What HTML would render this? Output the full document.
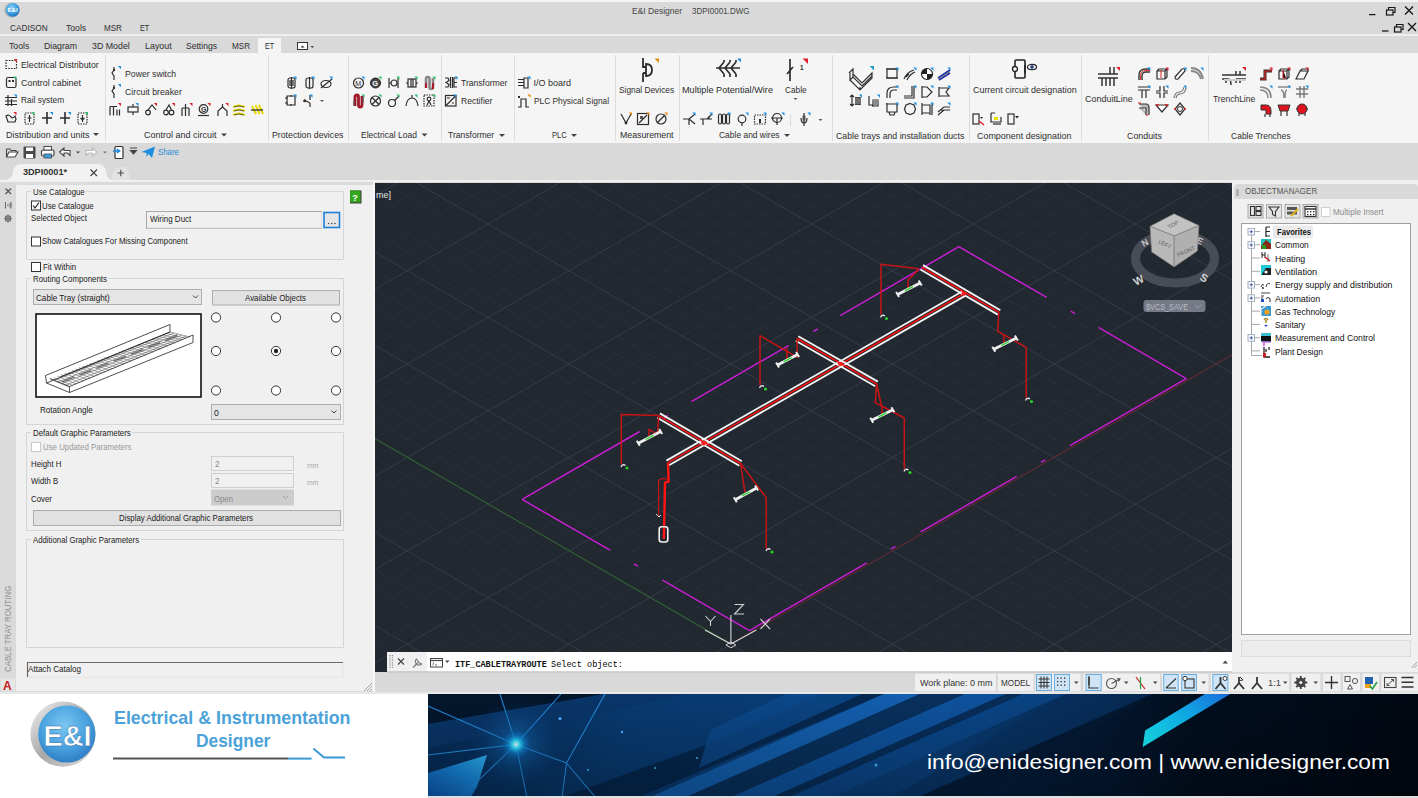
<!DOCTYPE html><html><head><meta charset="utf-8"><style>
html,body{margin:0;padding:0;width:1418px;height:798px;overflow:hidden;position:relative;background:#d9d9d9;}
body>*{box-sizing:border-box}
</style></head><body>
<div style="position:absolute;left:0px;top:0px;width:1418px;height:2px;background:#f4f4f4"></div>
<div style="position:absolute;left:0px;top:34px;width:1418px;height:2px;background:#efefef"></div>
<div style="position:absolute;left:0px;top:53px;width:1418px;height:90px;background:#f5f5f5"></div>
<div style="position:absolute;left:104.5px;top:55px;width:1px;height:86px;background:#dcdcdc"></div>
<div style="position:absolute;left:267.5px;top:55px;width:1px;height:86px;background:#dcdcdc"></div>
<div style="position:absolute;left:347.5px;top:55px;width:1px;height:86px;background:#dcdcdc"></div>
<div style="position:absolute;left:440.5px;top:55px;width:1px;height:86px;background:#dcdcdc"></div>
<div style="position:absolute;left:513.5px;top:55px;width:1px;height:86px;background:#dcdcdc"></div>
<div style="position:absolute;left:614.5px;top:55px;width:1px;height:86px;background:#dcdcdc"></div>
<div style="position:absolute;left:678.5px;top:55px;width:1px;height:86px;background:#dcdcdc"></div>
<div style="position:absolute;left:831.5px;top:55px;width:1px;height:86px;background:#dcdcdc"></div>
<div style="position:absolute;left:969px;top:55px;width:1px;height:86px;background:#dcdcdc"></div>
<div style="position:absolute;left:1080.5px;top:55px;width:1px;height:86px;background:#dcdcdc"></div>
<div style="position:absolute;left:1208px;top:55px;width:1px;height:86px;background:#dcdcdc"></div>
<div style="position:absolute;left:258px;top:38px;width:23px;height:15px;background:#f5f5f5"></div>
<svg style="position:absolute;left:0;top:160px" width="140" height="24"><path d="M2,21 Q12,20 13,12 Q14,4 22,4 H98 Q105,4 106,12 Q107,20 114,21 Z" fill="#f2f2f2"/></svg>
<svg style="position:absolute;left:100px;top:160px" width="40" height="24"><path d="M11,21 Q13,7 20,7 H24 Q28,7 29,14 Q30,20 35,21 Z" fill="#e2e2e2"/></svg>
<div style="position:absolute;left:0px;top:180px;width:1418px;height:2px;background:#f0f0f0"></div>
<div style="position:absolute;left:0px;top:182px;width:375px;height:510px;background:#dadada"></div>
<div style="position:absolute;left:16px;top:185px;width:357px;height:506px;background:#f0f0f0"></div>
<div style="position:absolute;left:373px;top:182px;width:2px;height:510px;background:#f7f7f7"></div>
<div style="position:absolute;left:375px;top:183px;width:857px;height:489px;background:#212830"></div>
<div style="position:absolute;left:387px;top:652px;width:845px;height:19.5px;background:#ffffff"></div>
<div style="position:absolute;left:387px;top:652px;width:40px;height:19.5px;background:#f0f0f0"></div>
<div style="position:absolute;left:375px;top:671.5px;width:1043px;height:21px;background:#d9d9d9"></div>
<div style="position:absolute;left:1232px;top:182px;width:186px;height:489.5px;background:#f0f0f0"></div>
<div style="position:absolute;left:1234px;top:184px;width:184px;height:15px;background:#d9d9d9;border-radius:4px 4px 0 0"></div>
<div style="position:absolute;left:1241px;top:223px;width:170px;height:412px;background:#fff;border:1px solid #a0a0a0"></div>
<div style="position:absolute;left:1241px;top:640px;width:170px;height:17px;background:#ececec;border:1px solid #dcdcdc"></div>
<div style="position:absolute;left:0px;top:692px;width:1418px;height:2px;background:#e8e8e8"></div>
<div style="position:absolute;left:0px;top:694px;width:428px;height:104px;background:#ffffff"></div>
<svg style="position:absolute;left:0;top:0" width="1418" height="200"><g transform="translate(6,60.5) scale(1.0)"><rect x="0" y="0" width="10.5" height="8" fill="none" stroke="#2d2d2d" stroke-width="1.2" stroke-dasharray="1.6 1.2"/></g><path d="M13.8,59 L17,59 L17,62.2 Z" fill="#e0202a"/><g transform="translate(6.5,77.5) scale(1.0)"><rect x="0" y="0" width="9.5" height="10" rx="1.5" fill="none" stroke="#2d2d2d" stroke-width="1.2"/><rect x="2" y="2.5" width="2" height="2" fill="#2d2d2d"/><rect x="5.5" y="2.5" width="2" height="2" fill="#2d2d2d"/></g><path d="M13.3,76.5 L16.5,76.5 L16.5,79.7 Z" fill="#2fbf6f"/><g transform="translate(5,95) scale(1.0)"><path d="M0,2.5 H12 M0,6 H12 M0,9.5 H12 M3,0 V11 M6.5,4 V11" fill="none" stroke="#2d2d2d" stroke-width="1.2"/></g><path d="M13.8,94.5 L17,94.5 L17,97.7 Z" fill="#1f8fe0"/><g transform="translate(6,113) scale(1.0)"><path d="M0,3 Q3,1 5,4 Q7,6 9,3 L10,6 L9,9 H2 Z" fill="none" stroke="#2d2d2d" stroke-width="1.2"/></g><path d="M13.3,112 L16.5,112 L16.5,115.2 Z" fill="#e0202a"/><g transform="translate(25,113) scale(1.0)"><rect x="0" y="0" width="9" height="11" fill="none" stroke="#2d2d2d" stroke-width="1.2" stroke-dasharray="1.5 1"/><path d="M4.5,2 V9 M2.5,5 H6.5" fill="none" stroke="#2d2d2d" stroke-width="1.2"/></g><path d="M31.3,112 L34.5,112 L34.5,115.2 Z" fill="#2fbf6f"/><g transform="translate(42,112) scale(1.0)"><path d="M5,0 V12 M0,6 H10" stroke="#2d2d2d" stroke-width="1.6" fill="none"/></g><path d="M49.8,112 L53,112 L53,115.2 Z" fill="#1f8fe0"/><g transform="translate(60,112) scale(1.0)"><path d="M5,0 V12 M0,6 H10" stroke="#2d2d2d" stroke-width="1.6" fill="none"/></g><path d="M67.8,112 L71,112 L71,115.2 Z" fill="#1f8fe0"/><g transform="translate(78,113) scale(1.0)"><rect x="0" y="0" width="9" height="11" fill="none" stroke="#2d2d2d" stroke-width="1.2" stroke-dasharray="1.5 1"/><path d="M4.5,2 V9 M2.5,5 L4.5,7 L6.5,5" fill="none" stroke="#2d2d2d" stroke-width="1.2"/></g><path d="M84.8,112 L88,112 L88,115.2 Z" fill="#2fbf6f"/><g transform="translate(111,67) scale(1.0)"><path d="M3,0 V3 L1,6 L3,9 V13" fill="none" stroke="#2d2d2d" stroke-width="1.2"/><path d="M2,2 L4,4 M4,2 L2,4" stroke="#2d2d2d" stroke-width="1"/></g><path d="M117.8,66 L121,66 L121,69.2 Z" fill="#1f8fe0"/><g transform="translate(111,85) scale(1.0)"><path d="M3,0 V3 L1,6 L3,9 V13" fill="none" stroke="#2d2d2d" stroke-width="1.2"/><path d="M2,2 L4,4 M4,2 L2,4" stroke="#2d2d2d" stroke-width="1"/></g><path d="M117.8,84 L121,84 L121,87.2 Z" fill="#1f8fe0"/><g transform="translate(109,103.5) scale(1.0)"><path d="M1,3 V12 M4.5,3 V12 M8,6 V12 M1,3 H8 M10.5,6 V12" fill="none" stroke="#2d2d2d" stroke-width="1.2"/></g><path d="M117.8,103 L121,103 L121,106.2 Z" fill="#e0202a"/><g transform="translate(128,104) scale(1.0)"><rect x="0" y="3" width="10" height="5" fill="none" stroke="#2d2d2d" stroke-width="1.2"/><path d="M5,0 V3 M5,8 V11" fill="none" stroke="#2d2d2d" stroke-width="1.2"/></g><path d="M135.3,103 L138.5,103 L138.5,106.2 Z" fill="#1f8fe0"/><g transform="translate(145,104) scale(1.0)"><circle cx="3" cy="8.5" r="2.3" fill="none" stroke="#2d2d2d" stroke-width="1.2"/><path d="M3,6 L7,1 L11,6" fill="none" stroke="#2d2d2d" stroke-width="1.2"/></g><path d="M153.8,103 L157,103 L157,106.2 Z" fill="#e0202a"/><g transform="translate(163,104) scale(1.0)"><circle cx="3" cy="8.5" r="2.3" fill="none" stroke="#2d2d2d" stroke-width="1.2"/><circle cx="8.5" cy="8.5" r="2.3" fill="none" stroke="#2d2d2d" stroke-width="1.2"/><path d="M3,6 L6,1 L8.5,6" fill="none" stroke="#2d2d2d" stroke-width="1.2"/></g><path d="M171.8,103 L175,103 L175,106.2 Z" fill="#e0202a"/><g transform="translate(181,104) scale(1.0)"><path d="M1,4 V12 M4.5,0 V12 M8,4 V12 M1,4 H8" fill="none" stroke="#2d2d2d" stroke-width="1.2"/></g><path d="M189.3,103 L192.5,103 L192.5,106.2 Z" fill="#e0202a"/><g transform="translate(198,104) scale(1.0)"><circle cx="5.5" cy="5" r="4.3" fill="none" stroke="#2d2d2d" stroke-width="1.2" stroke-width="1.6"/><text x="3" y="7.5" font-size="7" font-family="Liberation Sans" font-weight="700" fill="#2d2d2d">G</text><path d="M0,11.5 H11" fill="none" stroke="#2d2d2d" stroke-width="1.2"/></g><path d="M207.3,103 L210.5,103 L210.5,106.2 Z" fill="#e0202a"/><g transform="translate(217,104) scale(1.0)"><path d="M5.5,0 V3 L1,7 V12 M5.5,3 L10,7 V12" fill="none" stroke="#2d2d2d" stroke-width="1.2"/></g><path d="M225.3,103 L228.5,103 L228.5,106.2 Z" fill="#e0202a"/><g transform="translate(233,104) scale(1.0)"><path d="M0,3 Q6,0 12,3 M0,7 Q6,4 12,7 M0,11 Q6,8 12,11" stroke="#e6d800" stroke-width="1.8" fill="none"/><path d="M1,3 Q6,1 11,3 M1,7 Q6,5 11,7 M1,11 Q6,9 11,11" stroke="#222" stroke-width="0.7" fill="none"/></g><g transform="translate(251,104) scale(1.0)"><path d="M1,2 L5,10 M4.5,1 L8.5,10 M8,1 L12,10" stroke="#e6d800" stroke-width="2" fill="none"/><path d="M0,6 H12" stroke="#222" stroke-width="1.2"/></g><g transform="translate(287,77) scale(1.0)"><rect x="1" y="1" width="7" height="10" rx="2" fill="none" stroke="#2d2d2d" stroke-width="1.2"/><path d="M4.5,0 V12 M3,3 V9 M6,3 V9" fill="none" stroke="#2d2d2d" stroke-width="1.2" stroke-width="0.9"/></g><path d="M293.3,76.5 L296.5,76.5 L296.5,79.7 Z" fill="#1f8fe0"/><g transform="translate(305,77) scale(1.0)"><rect x="1" y="1" width="7" height="10" rx="2" fill="none" stroke="#2d2d2d" stroke-width="1.2"/><path d="M4.5,0 V12" fill="none" stroke="#2d2d2d" stroke-width="1.2" stroke-width="0.9"/></g><path d="M311.3,76.5 L314.5,76.5 L314.5,79.7 Z" fill="#1f8fe0"/><g transform="translate(321,78) scale(1.0)"><ellipse cx="5" cy="6" rx="5" ry="3.5" fill="none" stroke="#2d2d2d" stroke-width="1.2"/><path d="M0,10 L11,1" fill="none" stroke="#2d2d2d" stroke-width="1.2"/></g><path d="M329.3,76.5 L332.5,76.5 L332.5,79.7 Z" fill="#1f8fe0"/><g transform="translate(285,95) scale(1.0)"><path d="M2,1 H10 V10 H2 Z M0,3 H3 M0,8 H3 M6,0 V2 M6,9 V11" fill="none" stroke="#2d2d2d" stroke-width="1.2"/></g><path d="M293.3,94.5 L296.5,94.5 L296.5,97.7 Z" fill="#1f8fe0"/><g transform="translate(303,95) scale(1.0)"><path d="M7,0 V5 M7,8 V12 M7,8 L1,5 M1,5 H3" fill="none" stroke="#2d2d2d" stroke-width="1.2"/><circle cx="1.5" cy="6" r="1.3" fill="#2d2d2d"/></g><path d="M309.3,94.5 L312.5,94.5 L312.5,97.7 Z" fill="#1f8fe0"/><g transform="translate(320,100) scale(1.0)"><path d="M0,0 H4 L2,2 Z" fill="#555"/></g><g transform="translate(353,77) scale(1.0)"><circle cx="5.5" cy="6" r="5" fill="none" stroke="#2d2d2d" stroke-width="1.2"/><text x="2.3" y="9" font-size="7" font-family="Liberation Sans" fill="#2d2d2d">M</text></g><path d="M361.3,76.5 L364.5,76.5 L364.5,79.7 Z" fill="#1f8fe0"/><g transform="translate(370,77) scale(1.0)"><circle cx="5.5" cy="6" r="5" fill="#444" stroke="#222" stroke-width="1"/><text x="2.3" y="9" font-size="7.5" font-weight="700" font-family="Liberation Sans" fill="#fff">G</text></g><path d="M378.3,76.5 L381.5,76.5 L381.5,79.7 Z" fill="#2fbf6f"/><g transform="translate(388,77) scale(1.0)"><path d="M1,1 V11 M10,1 V11 M1,6 H3" fill="none" stroke="#2d2d2d" stroke-width="1.2"/><circle cx="6" cy="6" r="3" fill="none" stroke="#2d2d2d" stroke-width="1.2"/></g><path d="M396.3,76.5 L399.5,76.5 L399.5,79.7 Z" fill="#2fbf6f"/><g transform="translate(406,77) scale(1.0)"><rect x="2" y="2" width="8" height="8" fill="none" stroke="#2d2d2d" stroke-width="1.2"/><path d="M0,6 H2 M10,6 H12 M5,2 V10 M7,2 V10" fill="none" stroke="#2d2d2d" stroke-width="1.2" stroke-width="0.9"/></g><path d="M414.3,76.5 L417.5,76.5 L417.5,79.7 Z" fill="#2fbf6f"/><g transform="translate(424,77) scale(1.0)"><path d="M2,11 V2 Q2,0 4,0 Q5.5,0 5.5,2 V10 Q5.5,12 7,12 Q9,12 9,10 V1" stroke="#888" stroke-width="2.6" fill="none"/><path d="M2,6 V11 M9,6 V12" stroke="#b01020" stroke-width="1.8"/></g><path d="M432.3,76.5 L435.5,76.5 L435.5,79.7 Z" fill="#2fbf6f"/><g transform="translate(353,95) scale(1.0)"><path d="M2,11 V2 Q2,0 4,0 Q5.5,0 5.5,2 V10 Q5.5,12 7,12 Q9,12 9,10 V1" stroke="#a01828" stroke-width="2.8" fill="none"/><path d="M1,5 V11 M10,2 V8" stroke="#555" stroke-width="1.2"/></g><path d="M361.3,94.5 L364.5,94.5 L364.5,97.7 Z" fill="#2fbf6f"/><g transform="translate(370,95) scale(1.0)"><circle cx="5.5" cy="6" r="5" fill="none" stroke="#2d2d2d" stroke-width="1.2"/><path d="M2,2.5 L9,9.5 M9,2.5 L2,9.5" fill="none" stroke="#2d2d2d" stroke-width="1.2"/></g><path d="M378.3,94.5 L381.5,94.5 L381.5,97.7 Z" fill="#2fbf6f"/><g transform="translate(388,95) scale(1.0)"><circle cx="4" cy="8" r="3.5" fill="none" stroke="#2d2d2d" stroke-width="1.2"/><path d="M6.5,5.5 L11,1" fill="none" stroke="#2d2d2d" stroke-width="1.2"/></g><path d="M396.3,94.5 L399.5,94.5 L399.5,97.7 Z" fill="#2fbf6f"/><g transform="translate(406,95) scale(1.0)"><path d="M0,11 Q1,3 6,3 Q11,3 12,11 M6,0 V3" fill="none" stroke="#2d2d2d" stroke-width="1.2"/></g><path d="M414.3,94.5 L417.5,94.5 L417.5,97.7 Z" fill="#2fbf6f"/><g transform="translate(424,95) scale(1.0)"><rect x="0" y="0" width="10" height="11" fill="none" stroke="#2d2d2d" stroke-width="1.2" stroke-dasharray="1.5 1"/><circle cx="5" cy="4" r="1.8" fill="none" stroke="#2d2d2d" stroke-width="1.2" stroke-width="0.9"/><path d="M3,10 L5,6 L7,10" fill="none" stroke="#2d2d2d" stroke-width="1.2" stroke-width="0.9"/></g><path d="M432.3,94.5 L435.5,94.5 L435.5,97.7 Z" fill="#2fbf6f"/><g transform="translate(445,77) scale(1.0)"><path d="M0,1 H3 L4,3.5 L1,5.5 L4,7.5 L3,10 H0 M5.5,0 V11 M7.5,0 V11 M12,1 H9 V10 H12 M9,5.5 H12" fill="none" stroke="#2d2d2d" stroke-width="1.2"/></g><path d="M454.3,76.5 L457.5,76.5 L457.5,79.7 Z" fill="#1f8fe0"/><g transform="translate(445,95) scale(1.0)"><rect x="0.5" y="0.5" width="10.5" height="10.5" fill="none" stroke="#2d2d2d" stroke-width="1.2"/><path d="M1,10.5 L10.5,1 M2,3 H5 M7,8 H9" fill="none" stroke="#2d2d2d" stroke-width="1.2" stroke-width="0.9"/></g><path d="M453.3,94.5 L456.5,94.5 L456.5,97.7 Z" fill="#1f8fe0"/><g transform="translate(518,77) scale(1.0)"><path d="M0,2.5 H6 M0,5.5 H6 M0,8.5 H6 M6,1 H10 V11 H6 Z" fill="none" stroke="#2d2d2d" stroke-width="1.2"/></g><path d="M527.3,76.5 L530.5,76.5 L530.5,79.7 Z" fill="#1f8fe0"/><g transform="translate(518,96) scale(1.0)"><path d="M0,11 H3 V3 H8 V11 H11" fill="none" stroke="#2d2d2d" stroke-width="1.2"/><rect x="0" y="0" width="2" height="2" fill="#2d2d2d"/></g><path d="M527.3,94.5 L530.5,94.5 L530.5,97.7 Z" fill="#e08a10"/><g transform="translate(642,58) scale(1.0)"><path d="M1,0 V9 H4 M1,15 V24 M1,15 H4 M4,6 Q10,6 10,12 Q10,18 4,18 Z" stroke="#2d2d2d" stroke-width="1.8" fill="none"/></g><path d="M654.5,58.5 L659,58.5 L659,63.0 Z" fill="#e08a10"/><g transform="translate(621,113) scale(1.0)"><path d="M0,1 L5,10 L10,1" fill="none" stroke="#2d2d2d" stroke-width="1.2"/><circle cx="5" cy="10" r="1.4" fill="#2d2d2d"/></g><path d="M628.8,112.5 L632,112.5 L632,115.7 Z" fill="#e08a10"/><g transform="translate(637,113) scale(1.0)"><rect x="0.5" y="0.5" width="11" height="11" fill="none" stroke="#2d2d2d" stroke-width="1.2"/><path d="M2,10 L10,2" fill="none" stroke="#2d2d2d" stroke-width="1.2"/><rect x="3" y="3" width="3" height="3" fill="#555"/></g><path d="M646.3,112.5 L649.5,112.5 L649.5,115.7 Z" fill="#e08a10"/><g transform="translate(655,113) scale(1.0)"><circle cx="6" cy="6" r="5" fill="none" stroke="#2d2d2d" stroke-width="1.2"/><path d="M2,10 L10,2" fill="none" stroke="#2d2d2d" stroke-width="1.2"/></g><path d="M664.3,112.5 L667.5,112.5 L667.5,115.7 Z" fill="#e08a10"/><g transform="translate(716,60) scale(1.0)"><path d="M0,8 H24 M3,8 L8,2 M3,8 L8,14 M9,8 L14,2 M9,8 L14,14 M15,8 L20,2 M15,8 L20,14 M8,2 V0 M14,2 V0 M20,2 V0 M8,14 V17 M14,14 V17 M20,14 V17" stroke="#2d2d2d" stroke-width="1.7" fill="none"/></g><path d="M737,58.5 L741,58.5 L741,62.5 Z" fill="#1f8fe0"/><g transform="translate(784,59) scale(1.0)"><path d="M6,0 V22 M3,15 L9,8" stroke="#2d2d2d" stroke-width="1.7" fill="none"/></g><path d="M802.5,58.5 L808,58.5 L808,64.0 Z" fill="#e0202a"/><text x="800" y="70" font-size="6.5" font-weight="700" font-family="Liberation Sans" fill="#2d2d2d">1</text><path d="M793.5,98 H797.5 L795.5,100 Z" fill="#555"/><g transform="translate(683,113) scale(1.0)"><path d="M0,6 H6 M12,1 L6,6 L12,11 M6,6 V12" fill="none" stroke="#2d2d2d" stroke-width="1.2"/></g><path d="M692.3,112.5 L695.5,112.5 L695.5,115.7 Z" fill="#1f8fe0"/><g transform="translate(700,113) scale(1.0)"><path d="M0,6 H12 M3,6 V12 M7,6 L12,1 M9,6 V3" fill="none" stroke="#2d2d2d" stroke-width="1.2"/></g><path d="M709.3,112.5 L712.5,112.5 L712.5,115.7 Z" fill="#1f8fe0"/><g transform="translate(718,113) scale(1.0)"><rect x="0.5" y="1" width="3" height="10" rx="1.5" fill="none" stroke="#2d2d2d" stroke-width="1.2"/><rect x="4.5" y="1" width="3" height="10" rx="1.5" fill="none" stroke="#2d2d2d" stroke-width="1.2"/><rect x="8.5" y="1" width="3" height="10" rx="1.5" fill="none" stroke="#2d2d2d" stroke-width="1.2"/></g><path d="M727.3,112.5 L730.5,112.5 L730.5,115.7 Z" fill="#1f8fe0"/><g transform="translate(737,113) scale(1.0)"><circle cx="5" cy="6" r="3.8" fill="none" stroke="#2d2d2d" stroke-width="1.2"/><path d="M5,10 V13" fill="none" stroke="#2d2d2d" stroke-width="1.2"/></g><path d="M745.3,112.5 L748.5,112.5 L748.5,115.7 Z" fill="#1f8fe0"/><g transform="translate(754,113) scale(1.0)"><rect x="0.5" y="2" width="11" height="9" fill="none" stroke="#2d2d2d" stroke-width="1.2" stroke-dasharray="1.5 1"/><rect x="5" y="6" width="2" height="4" fill="#2d2d2d"/></g><path d="M763.3,112.5 L766.5,112.5 L766.5,115.7 Z" fill="#1f8fe0"/><g transform="translate(771,113) scale(1.0)"><circle cx="6" cy="5" r="4.5" fill="none" stroke="#2d2d2d" stroke-width="1.2"/><path d="M0,5 H12 M6,5 V12" fill="none" stroke="#2d2d2d" stroke-width="1.2"/></g><path d="M781.3,112.5 L784.5,112.5 L784.5,115.7 Z" fill="#1f8fe0"/><path d="M790.5,114 V126" stroke="#d8d8d8" stroke-width="1"/><g transform="translate(800,113) scale(1.0)"><path d="M4,0 V13 M1,5 Q1,10 4,10 Q7,10 7,5" fill="none" stroke="#2d2d2d" stroke-width="1.2"/><rect x="2.5" y="2" width="3" height="6" rx="1.5" fill="#555"/></g><path d="M807.3,112.5 L810.5,112.5 L810.5,115.7 Z" fill="#1f8fe0"/><path d="M818.5,119 H822.5 L820.5,121 Z" fill="#555"/><g transform="translate(849,66) scale(1.0)"><path d="M0,7 L4,3 V11 L13,20 L23,10 V7 L13,17 L4,8 M4,11 L1,14 V7 M1,14 L11,24 L23,12 V10 M11,24 V21" stroke="#333" stroke-width="1.2" fill="#fafafa"/></g><path d="M869.5,66 L874,66 L874,70.5 Z" fill="#1aa0c8"/><g transform="translate(850,95) scale(1.0)"><path d="M2,0 V11 M0,2 L2,0 L4,2 M0,9 L2,11 L4,9" fill="none" stroke="#2d2d2d" stroke-width="1.2"/><rect x="5" y="2" width="6" height="8" fill="#444"/><path d="M5,4 H11 M5,6 H11 M5,8 H11" stroke="#ddd" stroke-width="0.6"/></g><path d="M858.8,94.5 L862,94.5 L862,97.7 Z" fill="#1f8fe0"/><g transform="translate(868,95) scale(1.0)"><path d="M1,1 V10 H5 V5 H10 V11 H4" fill="none" stroke="#2d2d2d" stroke-width="1.2"/><rect x="5" y="5" width="5" height="5" fill="#888"/></g><path d="M876.8,94.5 L880,94.5 L880,97.7 Z" fill="#1f8fe0"/><g transform="translate(886,68) scale(1.0)"><rect x="1" y="1" width="10" height="9" fill="none" stroke="#2d2d2d" stroke-width="1.2"/><path d="M0,1 H12 M0,10 H12" fill="none" stroke="#2d2d2d" stroke-width="1.2"/></g><path d="M895.3,67.5 L898.5,67.5 L898.5,70.7 Z" fill="#1f8fe0"/><g transform="translate(904,68) scale(1.0)"><path d="M0,11 Q3,4 10,2 M2,9 L5,6" fill="none" stroke="#2d2d2d" stroke-width="1.2"/><path d="M3,12 Q6,6 11,4" fill="none" stroke="#2d2d2d" stroke-width="1.2" stroke-width="0.8"/></g><path d="M913.3,67.5 L916.5,67.5 L916.5,70.7 Z" fill="#1f8fe0"/><g transform="translate(921,68) scale(1.0)"><circle cx="6" cy="6" r="5.5" fill="#fff" stroke="#222" stroke-width="1.2"/><path d="M6,0.5 V6 H0.5 A5.5,5.5 0 0 1 6,0.5 Z M6,6 H11.5 A5.5,5.5 0 0 1 6,11.5 Z" fill="#222"/></g><path d="M930.3,67.5 L933.5,67.5 L933.5,70.7 Z" fill="#1f8fe0"/><g transform="translate(938,68) scale(1.0)"><path d="M0,10 L12,2 M1,12 L12,5" stroke="#1c2ca8" stroke-width="1.6" fill="none"/><path d="M0,11 L12,3.5" stroke="#777" stroke-width="1"/></g><path d="M947.3,67.5 L950.5,67.5 L950.5,70.7 Z" fill="#1f8fe0"/><g transform="translate(886,86) scale(1.0)"><path d="M1,12 V7 Q1,1 8,1 H11 M4,12 V8 Q4,4 8,4 H11" fill="none" stroke="#2d2d2d" stroke-width="1.2"/></g><path d="M895.3,85.5 L898.5,85.5 L898.5,88.7 Z" fill="#1f8fe0"/><g transform="translate(904,86) scale(1.0)"><path d="M0,10 H8 V0 M0,12 H10 V0" fill="none" stroke="#2d2d2d" stroke-width="1.2"/></g><path d="M913.3,85.5 L916.5,85.5 L916.5,88.7 Z" fill="#1f8fe0"/><g transform="translate(921,86) scale(1.0)"><path d="M1,0 V12 M1,1 H6 L11,6 L6,11 H1" fill="none" stroke="#2d2d2d" stroke-width="1.2"/></g><path d="M930.3,85.5 L933.5,85.5 L933.5,88.7 Z" fill="#1f8fe0"/><g transform="translate(938,86) scale(1.0)"><path d="M1,1 V11 M1,2 H11 L8,6 L11,10 H1" fill="none" stroke="#2d2d2d" stroke-width="1.2"/></g><path d="M947.3,85.5 L950.5,85.5 L950.5,88.7 Z" fill="#1f8fe0"/><g transform="translate(886,103) scale(1.0)"><path d="M1,0 V9 H11 V0 M0,1 H12 M3,9 L4,12 H8 L9,9" fill="none" stroke="#2d2d2d" stroke-width="1.2"/></g><path d="M895.3,102.5 L898.5,102.5 L898.5,105.7 Z" fill="#1f8fe0"/><g transform="translate(904,103) scale(1.0)"><path d="M6,0.5 L10,2 L11.5,6 L10,10 L6,11.5 L2,10 L0.5,6 L2,2 Z" fill="none" stroke="#2d2d2d" stroke-width="1.2"/></g><path d="M913.3,102.5 L916.5,102.5 L916.5,105.7 Z" fill="#1f8fe0"/><g transform="translate(921,103) scale(1.0)"><path d="M1,0 V12 M1,2 H9 V12 M11,0 V12 M1,10 H9" fill="none" stroke="#2d2d2d" stroke-width="1.2"/></g><path d="M930.3,102.5 L933.5,102.5 L933.5,105.7 Z" fill="#1f8fe0"/><g transform="translate(938,103) scale(1.0)"><path d="M0,9 L6,4 H12 M0,12 L6,7 H12 M3,6 L5,8" fill="none" stroke="#2d2d2d" stroke-width="1.2"/></g><path d="M947.3,102.5 L950.5,102.5 L950.5,105.7 Z" fill="#1f8fe0"/><g transform="translate(1012,60) scale(1.0)"><rect x="3" y="0" width="10" height="18" rx="1" stroke="#222" stroke-width="1.6" fill="none"/><circle cx="3" cy="9" r="2.5" stroke="#222" stroke-width="1.4" fill="#fff"/><path d="M13,5 V13" stroke="#222" stroke-width="1.6"/><ellipse cx="20" cy="7" rx="4.5" ry="2.6" fill="#fff" stroke="#222" stroke-width="1.2"/><circle cx="20" cy="7" r="1.8" fill="#1a3a80"/></g><g transform="translate(973,113) scale(1.0)"><rect x="0" y="1" width="6" height="10" fill="none" stroke="#2d2d2d" stroke-width="1.2"/><path d="M7,4 L10,4 L8.5,6 Z" fill="#222"/><path d="M6,8 L11,12" stroke="#e0202a" stroke-width="1.4"/></g><g transform="translate(990,113) scale(1.0)"><path d="M1,0 V9 H11 V4 M1,0 H5" fill="none" stroke="#2d2d2d" stroke-width="1.2"/><rect x="4" y="4" width="4" height="3" fill="#e8e000"/><path d="M3,11 H11" fill="none" stroke="#2d2d2d" stroke-width="1.2"/></g><g transform="translate(1008,113) scale(1.0)"><rect x="0" y="1" width="6" height="10" fill="none" stroke="#2d2d2d" stroke-width="1.2"/><path d="M7,3 L11,3 L9,5.5 Z" fill="#222"/></g><g transform="translate(1098,67) scale(1.0)"><path d="M0,7 H20 M0,11 H20 M4,11 V19 M8,11 V19 M12,11 V19 M16,11 V19 M12,0 V7 M16,0 V7" stroke="#333" stroke-width="1.5" fill="none"/></g><path d="M1116,67 L1120,67 L1120,71 Z" fill="#e0202a"/><g transform="translate(1138,68) scale(1.0)"><path d="M1,12 V7 Q1,1 8,1 H12 M4,12 V8 Q4,4 8,4 H12" stroke="#333" stroke-width="1.4" fill="none"/><path d="M2.5,12 V7.5 Q2.5,2.5 8,2.5 H12" stroke="#e02020" stroke-width="0.9" fill="none"/></g><path d="M1147.3,67.5 L1150.5,67.5 L1150.5,70.7 Z" fill="#1f8fe0"/><g transform="translate(1156,68) scale(1.0)"><path d="M1,3 L3,1 H11 V9 L9,11 H1 Z M1,3 H9 V11 M9,3 L11,1" fill="none" stroke="#2d2d2d" stroke-width="1.2"/><path d="M5,2 V10" stroke="#e02020" stroke-width="1"/></g><path d="M1165.3,67.5 L1168.5,67.5 L1168.5,70.7 Z" fill="#e0202a"/><g transform="translate(1174,68) scale(1.0)"><path d="M1,9 L8,1 Q11,0 11,3 L4,11 Q1,12 1,9 Z" stroke="#333" stroke-width="1.2" fill="#fff"/></g><path d="M1183.3,67.5 L1186.5,67.5 L1186.5,70.7 Z" fill="#1f8fe0"/><g transform="translate(1191,68) scale(1.0)"><path d="M0,3 Q8,3 10,11 M0,0 Q10,0 12,11" stroke="#888" stroke-width="1.8" fill="none"/></g><path d="M1200.3,67.5 L1203.5,67.5 L1203.5,70.7 Z" fill="#1f8fe0"/><g transform="translate(1138,86) scale(1.0)"><path d="M0,1 H12 M0,4 H12 M4,4 V12 M8,4 V12" fill="none" stroke="#2d2d2d" stroke-width="1.2" stroke-width="1.4"/></g><path d="M1147.3,85.5 L1150.5,85.5 L1150.5,88.7 Z" fill="#1f8fe0"/><g transform="translate(1156,86) scale(1.0)"><path d="M4,0 V5 H0 M8,0 V5 H12 M4,12 V7 H0 M8,12 V7 H12" fill="none" stroke="#2d2d2d" stroke-width="1.2" stroke-width="1.4"/></g><path d="M1165.3,85.5 L1168.5,85.5 L1168.5,88.7 Z" fill="#1f8fe0"/><g transform="translate(1174,86) scale(1.0)"><path d="M0,12 Q1,6 5,6 Q9,6 10,1 M2,12 Q3,8 6,8 Q11,8 12,2" stroke="#777" stroke-width="1.2" fill="none"/></g><path d="M1183.3,85.5 L1186.5,85.5 L1186.5,88.7 Z" fill="#1f8fe0"/><g transform="translate(1138,103) scale(1.0)"><path d="M1,1 H8 Q11,1 11,5 V12 M8,12 V5 H1" stroke="#333" stroke-width="1.2" fill="#bbb"/><path d="M0,0 H3 M9,11 V13" stroke="#e02020" stroke-width="1.2"/></g><g transform="translate(1156,103) scale(1.0)"><path d="M0,2 H12 L6,9 Z" stroke="#333" stroke-width="1.2" fill="#fff"/><path d="M0,2 H3 M9,2 H12" stroke="#e02020" stroke-width="1.4"/></g><g transform="translate(1174,103) scale(1.0)"><path d="M6,0 L11,6 L6,12 L1,6 Z" stroke="#333" stroke-width="1.2" fill="none"/><circle cx="6" cy="6" r="2.5" stroke="#333" stroke-width="1" fill="none"/><path d="M0,6 H2 M10,6 H12" stroke="#e02020" stroke-width="1.3"/></g><g transform="translate(1222,67) scale(1.0)"><path d="M0,8 H24 M0,12 H6 Q9,12 9,18 M24,12 H14 M4,12 V16 M14,8 V4 M18,8 V4 M14,12 V16 M18,12 V16" stroke="#333" stroke-width="1.5" fill="none"/><path d="M2,12 H24 V14 H2 Z" fill="#ccc"/></g><path d="M1242,67 L1246,67 L1246,71 Z" fill="#e0202a"/><g transform="translate(1260,68) scale(1.0)"><path d="M0,11 H5 V3 H12" stroke="#333" stroke-width="3" fill="none"/><path d="M0,11 H5 V3 H12" stroke="#e02020" stroke-width="1.2" fill="none"/></g><path d="M1269.3,67.5 L1272.5,67.5 L1272.5,70.7 Z" fill="#e0202a"/><g transform="translate(1278,68) scale(1.0)"><path d="M1,3 L3,1 H11 V9 L9,11 H1 Z M1,3 H9 V11 M9,3 L11,1" fill="none" stroke="#2d2d2d" stroke-width="1.2"/><path d="M5,2 V10 H8" stroke="#e02020" stroke-width="1"/></g><path d="M1287.3,67.5 L1290.5,67.5 L1290.5,70.7 Z" fill="#e0202a"/><g transform="translate(1296,68) scale(1.0)"><path d="M0,11 L4,3 H12 L8,11 Z M4,3 L6,1 H12 V3" fill="none" stroke="#2d2d2d" stroke-width="1.2" fill="#fff"/></g><path d="M1305.3,67.5 L1308.5,67.5 L1308.5,70.7 Z" fill="#e0202a"/><g transform="translate(1260,86) scale(1.0)"><path d="M0,1 Q11,1 11,12 M0,4 Q8,4 8,12" stroke="#888" stroke-width="1.6" fill="none"/></g><path d="M1269.3,85.5 L1272.5,85.5 L1272.5,88.7 Z" fill="#1f8fe0"/><g transform="translate(1278,86) scale(1.0)"><path d="M0,1 H12 M3,4 Q6,4 6,12 M9,4 Q7,4 7,12" stroke="#888" stroke-width="1.6" fill="none"/></g><path d="M1287.3,85.5 L1290.5,85.5 L1290.5,88.7 Z" fill="#1f8fe0"/><g transform="translate(1296,86) scale(1.0)"><path d="M0,3 H12 M0,8 H12 M4,0 V12 M8,0 V12" stroke="#777" stroke-width="1.4" fill="none"/></g><path d="M1305.3,85.5 L1308.5,85.5 L1308.5,88.7 Z" fill="#1f8fe0"/><g transform="translate(1260,103) scale(1.0)"><path d="M1,2 H6 Q11,2 11,8 V11 H6 V7 H1 Z" fill="#e0141e" stroke="#333" stroke-width="1"/><path d="M5,11 V14 M10,11 V14" stroke="#333" stroke-width="1.2"/></g><g transform="translate(1278,103) scale(1.0)"><path d="M0,2 H12 L10,8 H2 Z" fill="#e0141e" stroke="#333" stroke-width="1"/><path d="M3,8 V13 M9,8 V13" stroke="#333" stroke-width="1.2"/></g><g transform="translate(1296,103) scale(1.0)"><circle cx="6" cy="6" r="5" fill="#e0141e" stroke="#333" stroke-width="1"/><path d="M0,6 H2 M10,6 H12 M3,10 V13 M9,10 V13" stroke="#333" stroke-width="1.2"/></g><path d="M93,133 H99 L96,136 Z" fill="#444"/><path d="M221,133.5 H227 L224,136.5 Z" fill="#444"/><path d="M421.5,133.5 H427.5 L424.5,136.5 Z" fill="#444"/><path d="M499,134 H505 L502,137 Z" fill="#444"/><path d="M571,134 H577 L574,137 Z" fill="#444"/><path d="M784,134 H790 L787,137 Z" fill="#444"/></svg>
<svg style="position:absolute;left:0;top:0" width="1418" height="200"><defs><radialGradient id="lg" cx="40%" cy="35%" r="70%"><stop offset="0" stop-color="#8fd0f5"/><stop offset="0.6" stop-color="#3a9ee0"/><stop offset="1" stop-color="#1f6fb8"/></radialGradient><radialGradient id="lg2" cx="40%" cy="35%" r="75%"><stop offset="0" stop-color="#8ccff5"/><stop offset="0.55" stop-color="#4aa5df"/><stop offset="1" stop-color="#2b7cc4"/></radialGradient></defs><circle cx="11.5" cy="10.2" r="7.4" fill="#b8b8b8"/><circle cx="12.8" cy="9.8" r="6.9" fill="url(#lg)"/><text x="7.6" y="12.4" font-size="6" font-weight="700" font-family="Liberation Sans" fill="#fff">E&amp;I</text><path d="M1369,14.6 H1375.5" stroke="#1a1a1a" stroke-width="1.3"/><rect x="1386.5" y="10" width="6.5" height="5" fill="none" stroke="#1a1a1a" stroke-width="1.2"/><path d="M1388.5,10 V7.5 H1395 V12.5 H1393" fill="none" stroke="#1a1a1a" stroke-width="1.2"/><path d="M1405,6.5 L1413,14.5 M1413,6.5 L1405,14.5" stroke="#1a1a1a" stroke-width="1.4"/><path d="M1382,31 H1388.5" stroke="#1a1a1a" stroke-width="1.3"/><rect x="1394.5" y="27" width="6.5" height="5" fill="none" stroke="#1a1a1a" stroke-width="1.2"/><path d="M1396.5,27 V24.5 H1403 V29.5 H1401" fill="none" stroke="#1a1a1a" stroke-width="1.2"/><path d="M1408,23 L1416,31 M1416,23 L1408,31" stroke="#1a1a1a" stroke-width="1.4"/><rect x="297.5" y="42.5" width="10" height="7" fill="#fff" stroke="#333" stroke-width="1"/><path d="M300.5,47.5 L302.5,45.5 L304.5,47.5 Z" fill="#333"/><path d="M310.5,46 H314 L312.25,48 Z" fill="#444"/><path d="M6.5,149 H10 L11,150.5 H16 V152.5 M6.5,149 V157 H15 L18,152 H9 L6.5,157" fill="#fff" stroke="#444" stroke-width="1.1"/><rect x="23.5" y="146.5" width="12" height="12" rx="1" fill="#4a4a4a"/><rect x="26" y="147.5" width="7" height="3.5" fill="#fff"/><rect x="26" y="154" width="7" height="4" fill="#fff"/><rect x="41.5" y="150" width="12.5" height="6" rx="1.5" fill="#fff" stroke="#444" stroke-width="1.2"/><rect x="44" y="146.5" width="7.5" height="3.5" fill="#fff" stroke="#444" stroke-width="1"/><rect x="44" y="154" width="7.5" height="4" fill="#3a9de0" stroke="#444" stroke-width="0.8"/><path d="M59.5,152 L64,148 V150.5 H70 V155.5 L67.5,153 H64 V156 Z" fill="#fff" stroke="#444" stroke-width="1.1"/><path d="M76,151.5 H80 L78,153.5 Z" fill="#444"/><path d="M97,152 L92.5,148 V150.5 H86 V155.5 L88.5,153 H92.5 V156 Z" fill="#fff" stroke="#bbb" stroke-width="1.1"/><path d="M103,151.5 H107 L105,153.5 Z" fill="#777"/><rect x="115" y="146.5" width="8" height="12" rx="1" fill="#fff" stroke="#333" stroke-width="1.2"/><path d="M113,151 H119 M117,149 L119.5,151 L117,153" stroke="#1a88e0" stroke-width="1.6" fill="none"/><path d="M130,148 H137 M130.5,150.5 H136.5 L133.5,154 Z" stroke="#444" stroke-width="1.1" fill="#444"/><path d="M141.5,152 L155,146.5 L152,158 L148.5,154 L146.5,157 V153 Z" fill="#1e8ee0"/><path d="M90.5,169.5 L97,176 M97,169.5 L90.5,176" stroke="#444" stroke-width="1.2"/><path d="M117.5,173 H124 M120.75,169.75 V176.25" stroke="#555" stroke-width="1.2"/></svg>
<svg style="position:absolute;left:0;top:0" width="380" height="700"><path d="M31,191.5 H26.5 V259.5 H343.5 V191.5 H86" fill="none" stroke="#d5d5d5" stroke-width="1"/><path d="M31,278.5 H26.5 V424.5 H343.5 V278.5 H108" fill="none" stroke="#d5d5d5" stroke-width="1"/><path d="M31,432.5 H26.5 V530.5 H343.5 V432.5 H132" fill="none" stroke="#d5d5d5" stroke-width="1"/><path d="M31,539.5 H26.5 V647.5 H343.5 V539.5 H141" fill="none" stroke="#d5d5d5" stroke-width="1"/><rect x="31.5" y="201.0" width="9" height="9" fill="#fff" stroke="#333" stroke-width="1"/><path d="M33,205.5 L35,208.0 L39,202.5" fill="none" stroke="#222" stroke-width="1.2"/><rect x="31.5" y="237.0" width="9" height="9" fill="#fff" stroke="#333" stroke-width="1"/><rect x="31.5" y="262.5" width="9" height="9" fill="#fff" stroke="#333" stroke-width="1"/><rect x="31.5" y="442.5" width="9" height="9" fill="#fff" stroke="#c8c8c8" stroke-width="1"/><rect x="146.5" y="211.5" width="175" height="17" fill="#f0f0f0" stroke="#a9a9a9" stroke-width="1"/><path d="M147,228 H321.5 V212" stroke="#dcdcdc" stroke-width="1" fill="none"/><rect x="324" y="212.5" width="15.5" height="15" fill="#e5e5e5" stroke="#1a7fd8" stroke-width="1.6"/><circle cx="328.5" cy="223.5" r="0.7" fill="#333"/><circle cx="331.7" cy="223.5" r="0.7" fill="#333"/><circle cx="334.9" cy="223.5" r="0.7" fill="#333"/><rect x="350" y="190.5" width="11.5" height="13" fill="#3f3f3f"/><rect x="350" y="190.5" width="10.5" height="12" fill="#2e9a1a"/><rect x="351" y="191.5" width="8.5" height="10" fill="#32a81c"/><text x="352.3" y="200.5" font-size="9" font-weight="700" font-family="Liberation Sans" fill="#fff">?</text><rect x="33.5" y="289.5" width="168" height="15" fill="#e5e5e5" stroke="#adadad" stroke-width="1"/><path d="M193,295.5 L195.5,298 L198,295.5" fill="none" stroke="#444" stroke-width="1"/><rect x="212.5" y="290.5" width="127" height="14.5" fill="#e1e1e1" stroke="#adadad" stroke-width="1"/><rect x="36" y="314" width="165" height="83" fill="#fff" stroke="#111" stroke-width="1.6"/><g fill="none" stroke="#222" stroke-width="0.8"><path d="M45.5,375.5 L170,324.5 V332 L60,377"/><path d="M45.5,375.5 L46.5,383 L69.5,392.5 L193,342.5 V335 L69.5,386.5 V392.5"/><path d="M46.5,383 L170,332"/><path d="M69.5,386.5 L50,378.5"/></g><path d="M50.0,379.0 L69.0,387.0 M53.6,377.6 L72.7,385.5 M57.3,376.2 L76.3,384.0 M60.9,374.7 L80.0,382.5 M64.5,373.3 L83.7,380.9 M68.2,371.9 L87.3,379.4 M71.8,370.5 L91.0,377.9 M75.5,369.0 L94.7,376.4 M79.1,367.6 L98.3,374.9 M82.7,366.2 L102.0,373.4 M86.4,364.8 L105.7,371.8 M90.0,363.3 L109.3,370.3 M93.6,361.9 L113.0,368.8 M97.3,360.5 L116.7,367.3 M100.9,359.1 L120.3,365.8 M104.5,357.6 L124.0,364.3 M108.2,356.2 L127.7,362.8 M111.8,354.8 L131.3,361.2 M115.5,353.4 L135.0,359.7 M119.1,351.9 L138.7,358.2 M122.7,350.5 L142.3,356.7 M126.4,349.1 L146.0,355.2 M130.0,347.7 L149.7,353.7 M133.6,346.2 L153.3,352.2 M137.3,344.8 L157.0,350.6 M140.9,343.4 L160.7,349.1 M144.5,342.0 L164.3,347.6 M148.2,340.5 L168.0,346.1 M151.8,339.1 L171.7,344.6 M155.5,337.7 L175.3,343.1 M159.1,336.3 L179.0,341.5 M162.7,334.8 L182.7,340.0 M166.4,333.4 L186.3,338.5 M170.0,332.0 L190.0,337.0" stroke="#333" stroke-width="0.45" fill="none"/><path d="M53.8,380.6 L174.0,333.0 M57.6,382.2 L178.0,334.0 M61.4,383.8 L182.0,335.0 M65.2,385.4 L186.0,336.0" stroke="#444" stroke-width="0.5" fill="none"/><path d="M62.1,381.9 L74.1,377.1" stroke="#222" stroke-width="1.6" opacity="0.55"/><path d="M79.3,375.0 L91.3,370.2" stroke="#222" stroke-width="1.6" opacity="0.55"/><path d="M96.5,368.1 L108.5,363.3" stroke="#222" stroke-width="1.6" opacity="0.55"/><path d="M113.8,361.1 L125.8,356.4" stroke="#222" stroke-width="1.6" opacity="0.55"/><path d="M131.0,354.2 L143.0,349.4" stroke="#222" stroke-width="1.6" opacity="0.55"/><path d="M148.2,347.3 L160.2,342.5" stroke="#222" stroke-width="1.6" opacity="0.55"/><path d="M165.4,340.4 L177.4,335.6" stroke="#222" stroke-width="1.6" opacity="0.55"/><circle cx="216" cy="317.5" r="4.6" fill="#fff" stroke="#333" stroke-width="1"/><circle cx="276" cy="317.5" r="4.6" fill="#fff" stroke="#333" stroke-width="1"/><circle cx="336" cy="317.5" r="4.6" fill="#fff" stroke="#333" stroke-width="1"/><circle cx="216" cy="351" r="4.6" fill="#fff" stroke="#333" stroke-width="1"/><circle cx="276" cy="351" r="4.6" fill="#fff" stroke="#333" stroke-width="1"/><circle cx="336" cy="351" r="4.6" fill="#fff" stroke="#333" stroke-width="1"/><circle cx="216" cy="390.5" r="4.6" fill="#fff" stroke="#333" stroke-width="1"/><circle cx="276" cy="390.5" r="4.6" fill="#fff" stroke="#333" stroke-width="1"/><circle cx="336" cy="390.5" r="4.6" fill="#fff" stroke="#333" stroke-width="1"/><circle cx="276" cy="351" r="2.2" fill="#222"/><rect x="211.5" y="404.5" width="129" height="15" fill="#e5e5e5" stroke="#adadad" stroke-width="1"/><path d="M331.5,410.5 L334,413 L336.5,410.5" fill="none" stroke="#444" stroke-width="1"/><rect x="211.5" y="456.5" width="82" height="14" fill="#f0f0f0" stroke="#cfcfcf" stroke-width="1"/><rect x="211.5" y="473.5" width="82" height="14" fill="#f0f0f0" stroke="#cfcfcf" stroke-width="1"/><rect x="211" y="489.5" width="83" height="16" fill="#cccccc"/><path d="M283,496 L285.5,498.5 L288,496" fill="none" stroke="#999" stroke-width="0.9"/><rect x="33.5" y="510.5" width="307" height="15" fill="#e1e1e1" stroke="#adadad" stroke-width="1"/><rect x="27" y="662" width="316.5" height="15.5" fill="#f0f0f0"/><path d="M27.5,677 V662.5 H343" stroke="#6a6a6a" stroke-width="1.2" fill="none"/><path d="M28,677 H343 V663" stroke="#e4e4e4" stroke-width="1" fill="none"/><path d="M5.5,188.5 L11,194 M11,188.5 L5.5,194" stroke="#555" stroke-width="1.2"/><path d="M5.5,202 V208.5 M7,205.2 H9.5 M9.5,203 L11,205.2 L9.5,207.4 M11,202 V208.5" stroke="#666" stroke-width="1" fill="none"/><circle cx="8" cy="218.5" r="2.6" fill="none" stroke="#666" stroke-width="1.1"/><path d="M8,214.5 V222.5 M4,218.5 H12 M5.2,215.7 L10.8,221.3 M10.8,215.7 L5.2,221.3" stroke="#666" stroke-width="0.9"/><rect x="1" y="678.5" width="14" height="12" fill="#e6e6e6"/><text x="3" y="689.5" font-size="12" font-weight="700" font-family="Liberation Sans" fill="#c41a20">A</text><path d="M372,683 L364,691 M372,686 L367,691 M372,689 L369.5,691.5" stroke="#999" stroke-width="0.9"/></svg>
<div style="position:absolute;left:1.5px;top:671.5px;width:86px;height:12px;transform:rotate(-90deg) scaleX(0.81);transform-origin:0 0;font:400 9.6px/12px 'Liberation Sans',sans-serif;color:#8e8e8e;white-space:nowrap;letter-spacing:0.05px">CABLE TRAY ROUTING</div>
<svg style="position:absolute;left:0;top:0" width="1418" height="700"><defs><clipPath id="vc"><path d="M375,183 H1232 V652 H387 V672 H375 Z"/></clipPath></defs><g clip-path="url(#vc)"><path d="M375,-289.55 L1232,205.16 M375,-270.87 L1232,223.84 M375,-252.19 L1232,242.52 M375,-233.51 L1232,261.20 M375,-196.15 L1232,298.56 M375,-177.47 L1232,317.24 M375,-158.79 L1232,335.92 M375,-140.11 L1232,354.60 M375,-102.75 L1232,391.96 M375,-84.07 L1232,410.64 M375,-65.39 L1232,429.32 M375,-46.71 L1232,448.00 M375,-9.35 L1232,485.36 M375,9.33 L1232,504.04 M375,28.01 L1232,522.72 M375,46.69 L1232,541.40 M375,84.05 L1232,578.76 M375,102.73 L1232,597.44 M375,121.41 L1232,616.12 M375,140.09 L1232,634.80 M375,177.45 L1232,672.16 M375,196.13 L1232,690.84 M375,214.81 L1232,709.52 M375,233.49 L1232,728.20 M375,270.85 L1232,765.56 M375,289.53 L1232,784.24 M375,308.21 L1232,802.92 M375,326.89 L1232,821.60 M375,364.25 L1232,858.96 M375,382.93 L1232,877.64 M375,401.61 L1232,896.32 M375,420.29 L1232,915.00 M375,457.65 L1232,952.36 M375,476.33 L1232,971.04 M375,495.01 L1232,989.72 M375,513.69 L1232,1008.40 M375,551.05 L1232,1045.76 M375,569.73 L1232,1064.44 M375,588.41 L1232,1083.12 M375,607.09 L1232,1101.80 M375,644.45 L1232,1139.16 M375,663.13 L1232,1157.84 M375,214.51 L1232,-280.20 M375,233.19 L1232,-261.52 M375,251.87 L1232,-242.84 M375,270.55 L1232,-224.16 M375,307.91 L1232,-186.80 M375,326.59 L1232,-168.12 M375,345.27 L1232,-149.44 M375,363.95 L1232,-130.76 M375,401.31 L1232,-93.40 M375,419.99 L1232,-74.72 M375,438.67 L1232,-56.04 M375,457.35 L1232,-37.36 M375,494.71 L1232,0.00 M375,513.39 L1232,18.68 M375,532.07 L1232,37.36 M375,550.75 L1232,56.04 M375,588.11 L1232,93.40 M375,606.79 L1232,112.08 M375,625.47 L1232,130.76 M375,644.15 L1232,149.44 M375,681.51 L1232,186.80 M375,700.19 L1232,205.48 M375,718.87 L1232,224.16 M375,737.55 L1232,242.84 M375,774.91 L1232,280.20 M375,793.59 L1232,298.88 M375,812.27 L1232,317.56 M375,830.95 L1232,336.24 M375,868.31 L1232,373.60 M375,886.99 L1232,392.28 M375,905.67 L1232,410.96 M375,924.35 L1232,429.64 M375,961.71 L1232,467.00 M375,980.39 L1232,485.68 M375,999.07 L1232,504.36 M375,1017.75 L1232,523.04 M375,1055.11 L1232,560.40 M375,1073.79 L1232,579.08 M375,1092.47 L1232,597.76 M375,1111.15 L1232,616.44 M375,1148.51 L1232,653.80 M375,1167.19 L1232,672.48" stroke="#282e3b" stroke-width="1" fill="none"/><path d="M375,-308.23 L1232,186.48 M375,-214.83 L1232,279.88 M375,-121.43 L1232,373.28 M375,-28.03 L1232,466.68 M375,65.37 L1232,560.08 M375,158.77 L1232,653.48 M375,252.17 L1232,746.88 M375,345.57 L1232,840.28 M375,438.97 L1232,933.68 M375,532.37 L1232,1027.08 M375,625.77 L1232,1120.48 M375,195.83 L1232,-298.88 M375,289.23 L1232,-205.48 M375,382.63 L1232,-112.08 M375,476.03 L1232,-18.68 M375,569.43 L1232,74.72 M375,662.83 L1232,168.12 M375,756.23 L1232,261.52 M375,849.63 L1232,354.92 M375,943.03 L1232,448.32 M375,1036.43 L1232,541.72 M375,1129.83 L1232,635.12" stroke="#363b4d" stroke-width="1" fill="none"/><path d="M730.9,643.9 L375,438.5" stroke="#2f6a2a" stroke-width="1" fill="none"/><path d="M730.9,643.9 L1232,354.6" stroke="#6a2428" stroke-width="1" fill="none"/><path d="M958.9,246.7 L840.3,315.6 M817.7,329.0 L813.3,331.6 M788.9,345.3 L691.4,401.6 M667.7,415.3 L663.9,417.5 M639.7,431.5 L522.1,499.4 M522.1,499.4 L610.4,550.4 M633.8,563.8 L638.0,566.2 M662.5,580.1 L749.5,630.6 M749.5,630.6 L866.8,562.9 M891.0,548.9 L895.5,546.3 M920.6,531.9 L1016.7,476.4 M1041.0,462.4 L1045.3,459.9 M1069.9,445.7 L1186.3,378.6 M958.9,246.7 L1046.7,297.4 M1070.6,311.2 L1075.0,313.7 M1098.5,327.3 L1186.3,378.6" stroke="#c81ed2" stroke-width="1.5" fill="none" stroke-linecap="butt"/><path d="M962.5,291.3 L666.4,460.6 M965.1,295.9 L669.0,465.2" stroke="#f4f4f4" stroke-width="1.8" fill="none"/><path d="M963.8,293.6 L667.7,462.9" stroke="#ff1010" stroke-width="1.6" fill="none"/><path d="M920.4,269.5 L997.8,314.6 M923.0,265.1 L1000.4,310.2" stroke="#f4f4f4" stroke-width="1.8" fill="none"/><path d="M921.7,267.3 L999.1,312.4" stroke="#ff1010" stroke-width="1.6" fill="none"/><path d="M795.7,340.8 L875.3,386.2 M798.3,336.2 L877.9,381.6" stroke="#f4f4f4" stroke-width="1.8" fill="none"/><path d="M797.0,338.5 L876.6,383.9" stroke="#ff1010" stroke-width="1.6" fill="none"/><path d="M657.3,417.8 L739.3,465.7 M659.9,413.4 L741.9,461.3" stroke="#f4f4f4" stroke-width="1.8" fill="none"/><path d="M658.6,415.6 L740.6,463.5" stroke="#ff1010" stroke-width="1.6" fill="none"/><circle cx="963.8" cy="293.6" r="2.2" fill="#ff2020"/><circle cx="840.3" cy="363.9" r="2.2" fill="#ff2020"/><circle cx="703.7" cy="443.3" r="2.2" fill="#ff2020"/><path d="M918.6,268.8 L881,264.3 L881,314.7" stroke="#c81414" stroke-width="1.5" fill="none" stroke-linejoin="round"/><path d="M880.5,317.5 Q882,314.0 885,316.0" stroke="#e8e8e8" stroke-width="1.3" fill="none"/><circle cx="886.5" cy="318.5" r="1.6" fill="#28d028"/><path d="M919,269 L908.1,280 L908.1,289" stroke="#c81414" stroke-width="1.5" fill="none" stroke-linejoin="round"/><path d="M897.6,294.4 L920.2,283" stroke="#f0f0f0" stroke-width="2.8" fill="none"/><path d="M896.1,291.9 L899.1,296.9" stroke="#f0f0f0" stroke-width="2" fill="none"/><path d="M918.7,280.5 L921.7,285.5" stroke="#f0f0f0" stroke-width="2" fill="none"/><path d="M904.9000000000001,290.8 L912.9000000000001,286.59999999999997" stroke="#30d030" stroke-width="1.4" fill="none"/><path d="M999,312.4 L997.6,331.2 L1026.2,347.4 L1026.2,398" stroke="#c81414" stroke-width="1.5" fill="none" stroke-linejoin="round"/><path d="M1025.5,400.5 Q1027,397.0 1030,399.0" stroke="#e8e8e8" stroke-width="1.3" fill="none"/><circle cx="1031.5" cy="401.5" r="1.6" fill="#28d028"/><path d="M1004,334 L1004,344" stroke="#c81414" stroke-width="1.5" fill="none" stroke-linejoin="round"/><path d="M993.8,349.2 L1016.4,338" stroke="#f0f0f0" stroke-width="2.8" fill="none"/><path d="M992.3,346.7 L995.3,351.7" stroke="#f0f0f0" stroke-width="2" fill="none"/><path d="M1014.9,335.5 L1017.9,340.5" stroke="#f0f0f0" stroke-width="2" fill="none"/><path d="M1001.0999999999999,345.70000000000005 L1009.0999999999999,341.5" stroke="#30d030" stroke-width="1.4" fill="none"/><path d="M797,338.5 L797.4,357.3 L760,335.7 L760,385.2" stroke="#c81414" stroke-width="1.5" fill="none" stroke-linejoin="round"/><path d="M759.5,388 Q761,384.5 764,386.5" stroke="#e8e8e8" stroke-width="1.3" fill="none"/><circle cx="765.5" cy="389" r="1.6" fill="#28d028"/><path d="M787,348 L787,360" stroke="#c81414" stroke-width="1.5" fill="none" stroke-linejoin="round"/><path d="M777.6,365 L797.6,354.5" stroke="#f0f0f0" stroke-width="2.8" fill="none"/><path d="M776.1,362.5 L779.1,367.5" stroke="#f0f0f0" stroke-width="2" fill="none"/><path d="M796.1,352.0 L799.1,357.0" stroke="#f0f0f0" stroke-width="2" fill="none"/><path d="M783.6,361.85 L791.6,357.65" stroke="#30d030" stroke-width="1.4" fill="none"/><path d="M876.6,384 L875.3,402.7 L904.3,418 L904.3,469" stroke="#c81414" stroke-width="1.5" fill="none" stroke-linejoin="round"/><path d="M904.0,471.5 Q905.5,468.0 908.5,470.0" stroke="#e8e8e8" stroke-width="1.3" fill="none"/><circle cx="910.0" cy="472.5" r="1.6" fill="#28d028"/><path d="M876.6,384 L882,408 L882,415" stroke="#c81414" stroke-width="1.5" fill="none" stroke-linejoin="round"/><path d="M871.7,420.2 L892.9,409.8" stroke="#f0f0f0" stroke-width="2.8" fill="none"/><path d="M870.2,417.7 L873.2,422.7" stroke="#f0f0f0" stroke-width="2" fill="none"/><path d="M891.4,407.3 L894.4,412.3" stroke="#f0f0f0" stroke-width="2" fill="none"/><path d="M878.3,417.1 L886.3,412.9" stroke="#30d030" stroke-width="1.4" fill="none"/><path d="M658.6,415.6 L621.3,414.5 L621.3,464.6" stroke="#c81414" stroke-width="1.5" fill="none" stroke-linejoin="round"/><path d="M621.0,467 Q622.5,463.5 625.5,465.5" stroke="#e8e8e8" stroke-width="1.3" fill="none"/><circle cx="627.0" cy="468" r="1.6" fill="#28d028"/><path d="M658.6,415.6 L657.5,434.7 L649,429.4 L649,437" stroke="#c81414" stroke-width="1.5" fill="none" stroke-linejoin="round"/><path d="M638.3,443.3 L660.7,431.5" stroke="#f0f0f0" stroke-width="2.8" fill="none"/><path d="M636.8,440.8 L639.8,445.8" stroke="#f0f0f0" stroke-width="2" fill="none"/><path d="M659.2,429.0 L662.2,434.0" stroke="#f0f0f0" stroke-width="2" fill="none"/><path d="M645.5,439.5 L653.5,435.29999999999995" stroke="#30d030" stroke-width="1.4" fill="none"/><path d="M668,463 L668.6,481.6 L665,482.7 L663.9,539" stroke="#ff1414" stroke-width="2.4" fill="none" stroke-linejoin="round"/><path d="M668,479 L661.8,478.4 L658.6,480.5 L658.6,515.7" stroke="#c81414" stroke-width="1.2" fill="none" stroke-linejoin="round"/><path d="M656,514 L659,517 L661,515" stroke="#e0e0e0" stroke-width="1" fill="none"/><rect x="659.2" y="526.8" width="8.6" height="15.2" rx="2.5" fill="none" stroke="#f0f0f0" stroke-width="1.6"/><path d="M740.6,463.5 L744.9,492.3" stroke="#c81414" stroke-width="1.5" fill="none" stroke-linejoin="round"/><path d="M740.6,463.5 L766.2,497.6 L766.2,548.7" stroke="#c81414" stroke-width="1.5" fill="none" stroke-linejoin="round"/><path d="M766.0,551 Q767.5,547.5 770.5,549.5" stroke="#e8e8e8" stroke-width="1.3" fill="none"/><circle cx="772.0" cy="552" r="1.6" fill="#28d028"/><path d="M735.3,499.7 L756.6,488" stroke="#f0f0f0" stroke-width="2.8" fill="none"/><path d="M733.8,497.2 L736.8,502.2" stroke="#f0f0f0" stroke-width="2" fill="none"/><path d="M755.1,485.5 L758.1,490.5" stroke="#f0f0f0" stroke-width="2" fill="none"/><path d="M741.95,495.95000000000005 L749.95,491.75" stroke="#30d030" stroke-width="1.4" fill="none"/><path d="M730.9,642.9 V615 M730.9,643.9 L705,629.9 M730.9,643.9 L756.3,629.9" stroke="#d8d8d8" stroke-width="1.1" fill="none"/><path d="M725.9,644.9 L730.9,641.9 L735.9,644.9 L730.9,647.9 Z" stroke="#d8d8d8" stroke-width="1" fill="none"/><path d="M734.5,604.5 H743.5 L734.5,614 H744" stroke="#d0d0d0" stroke-width="1.1" fill="none"/><path d="M705.5,616 L710.5,621.5 L715.5,616 M710.5,621.5 V626" stroke="#d0d0d0" stroke-width="1.1" fill="none"/><path d="M760.5,619 L770,629 M770,619 L760.5,629" stroke="#d0d0d0" stroke-width="1.1" fill="none"/><ellipse cx="1175" cy="258.5" rx="39.5" ry="24.5" fill="none" stroke="#474c56" stroke-width="9"/><text x="1141" y="245" font-size="9" font-family="Liberation Sans" font-weight="700" fill="#c4c4c4" transform="rotate(-28 1146 241)">N</text><text x="1197" y="245" font-size="9" font-family="Liberation Sans" font-weight="700" fill="#c4c4c4" transform="rotate(28 1202 241)">E</text><path d="M1174.1,213.8 L1199,225.6 L1174.1,236 L1150,226.3 Z" fill="#c2c2c2" stroke="#7a7a7a" stroke-width="0.6"/><path d="M1150,226.3 L1174.1,236 V266.9 L1151.6,251.9 Z" fill="#b8b8b8" stroke="#7a7a7a" stroke-width="0.6"/><path d="M1199,225.6 L1174.1,236 V266.9 L1197.4,251.1 Z" fill="#b0b0b0" stroke="#7a7a7a" stroke-width="0.6"/><text x="0" y="0" transform="translate(1169,229) rotate(-28)" font-size="5.5" font-family="Liberation Sans" fill="#5a5a5a">TOP</text><text x="0" y="0" transform="translate(1158,243) rotate(26)" font-size="5.5" font-family="Liberation Sans" fill="#5a5a5a">LEFT</text><text x="0" y="0" transform="translate(1178,257) rotate(-24)" font-size="5.5" font-family="Liberation Sans" fill="#5a5a5a">FRONT</text><text x="1132" y="283" font-size="11" font-family="Liberation Sans" font-weight="700" fill="#cfcfcf" transform="rotate(-28 1140 277)">W</text><text x="1201" y="283" font-size="11" font-family="Liberation Sans" font-weight="700" fill="#cfcfcf" transform="rotate(28 1207 277)">S</text><rect x="1143.5" y="300" width="62" height="12" rx="3" fill="#767a86"/><text x="1146" y="309.5" font-size="8.6" font-family="Liberation Sans" fill="#b9bcc6" textLength="42" lengthAdjust="spacingAndGlyphs">$VCS_SAVE</text><path d="M1195,305 L1198,308 L1201,305" stroke="#9a9ea8" stroke-width="1" fill="none"/></g></svg>
<svg style="position:absolute;left:0;top:0" width="1418" height="798"><defs><linearGradient id="bg1" x1="0" y1="0" x2="1" y2="0"><stop offset="0" stop-color="#062c58"/><stop offset="0.2" stop-color="#083a70"/><stop offset="0.5" stop-color="#0a3f7a"/><stop offset="0.68" stop-color="#062a54"/><stop offset="0.77" stop-color="#031426"/><stop offset="0.9" stop-color="#020a16"/><stop offset="1" stop-color="#000306"/></linearGradient><linearGradient id="vd" x1="0" y1="0" x2="0" y2="1"><stop offset="0" stop-color="#000" stop-opacity="0"/><stop offset="1" stop-color="#000" stop-opacity="0.25"/></linearGradient><radialGradient id="star"><stop offset="0" stop-color="#e8ffff"/><stop offset="0.25" stop-color="#30e0ff"/><stop offset="0.6" stop-color="#1090e0" stop-opacity="0.5"/><stop offset="1" stop-color="#0060c0" stop-opacity="0"/></radialGradient><radialGradient id="glow"><stop offset="0" stop-color="#1a90e0" stop-opacity="0.6"/><stop offset="1" stop-color="#0a4080" stop-opacity="0"/></radialGradient><linearGradient id="cy1" x1="0" y1="1" x2="1" y2="0"><stop offset="0" stop-color="#18f0f8"/><stop offset="0.5" stop-color="#10b8f0"/><stop offset="1" stop-color="#1a6ad8"/></linearGradient><linearGradient id="cy2" x1="0" y1="1" x2="1" y2="0"><stop offset="0" stop-color="#0a5cb8"/><stop offset="0.6" stop-color="#1a90e8"/><stop offset="1" stop-color="#30c0ff"/></linearGradient></defs><rect x="428" y="694" width="990" height="104" fill="url(#bg1)"/><path d="M428,694 H605 L428,724 Z" fill="#03162c"/><path d="M428,724 L605,694 H690 L428,748 Z" fill="#0a3568" opacity="0.9"/><path d="M560,798 L706,745 L820,694 L884,694 L636,798 Z" fill="#04203f" opacity="0.7"/><path d="M710,730 L786,694 L862,694 L699,768 Z" fill="#0c4a8e" opacity="0.8"/><path d="M884,694 L920,694 L684,798 L648,798 Z" fill="#1462b4" opacity="0.9"/><path d="M920,694 L965,694 L729,798 L684,798 Z" fill="#082e58" opacity="0.85"/><path d="M965,694 L1006,694 L770,798 L729,798 Z" fill="#0f56a5" opacity="0.85"/><path d="M1006,694 L1023,694 L787,798 L770,798 Z" fill="#072c55" opacity="0.85"/><path d="M1023,694 L1066,694 L830,798 L787,798 Z" fill="#0c4a90" opacity="0.7"/><path d="M1066,694 L1152,694 L976,798 L890,798 Z" fill="#082f5c" opacity="0.55"/><path d="M1152,694 H1418 V798 H916 Z" fill="#020c1a" opacity="0.6"/><path d="M516,744.4 L428,706 M516,744.4 L500,694 M516,744.4 L561,694 M516,744.4 L428,755 M516,744.4 L460,798 M516,744.4 L527,798 M516,744.4 L566.5,763 M566.5,763 L605,694 M566.5,763 L562,798 M566.5,763 L596,798" stroke="#2a9af0" stroke-width="1.1" fill="none" opacity="0.85"/><circle cx="516" cy="744.4" r="45" fill="url(#glow)"/><circle cx="516" cy="744.4" r="15" fill="url(#star)"/><path d="M428,773 L487,755 L477,787 L470,798 H428 Z" fill="url(#cy2)" opacity="0.9"/><path d="M1142.7,747.1 L1145.1,730.4 L1205,694 L1230.2,694 Z" fill="url(#cy1)"/><circle cx="560" cy="718.5" r="1.5" fill="#40b8ff"/><circle cx="622" cy="732" r="1.2" fill="#40b8ff"/><circle cx="655" cy="768" r="1" fill="#40b8ff"/><circle cx="588" cy="770" r="1" fill="#40b8ff"/><circle cx="697" cy="758" r="1" fill="#40b8ff"/><circle cx="876" cy="765" r="1.5" fill="#40b8ff"/><rect x="428" y="694" width="990" height="104" fill="url(#vd)"/><rect x="428" y="796" width="990" height="2" fill="#e0e0e0"/><defs><radialGradient id="lgb" cx="45%" cy="35%" r="70%"><stop offset="0" stop-color="#7cc6f0"/><stop offset="0.55" stop-color="#4aa3e0"/><stop offset="1" stop-color="#2a78c0"/></radialGradient><linearGradient id="silver" x1="0" y1="0" x2="1" y2="1"><stop offset="0" stop-color="#f2f2f2"/><stop offset="0.5" stop-color="#a8a8a8"/><stop offset="1" stop-color="#dcdcdc"/></linearGradient></defs><circle cx="63" cy="734.2" r="32.6" fill="url(#silver)"/><circle cx="66.8" cy="734" r="28.6" fill="url(#lgb)"/><text x="43.5" y="745.6" font-size="29" font-weight="700" font-family="Liberation Sans" fill="#ffffff" textLength="48" lengthAdjust="spacingAndGlyphs" stroke="#2a6aa0" stroke-width="0.4">E&amp;I</text><path d="M113,758.6 H288" stroke="#555" stroke-width="2"/><path d="M288,758.6 H311.6" stroke="#3a9ad8" stroke-width="2"/><path d="M313.4,748.6 L324,757.5 H345" stroke="#3a9ad8" stroke-width="2" fill="none"/></svg>
<svg style="position:absolute;left:0;top:0" width="1418" height="700"><path d="M387,671.9 H1232" stroke="#b8b8b8" stroke-width="1"/><path d="M390,655 V668 M392.5,655 V668" stroke="#909090" stroke-width="1.2" stroke-dasharray="1.2 1.2"/><path d="M398,658.5 L404,664.5 M404,658.5 L398,664.5" stroke="#444" stroke-width="1.2"/><path d="M413,667.5 L418,662.5 M416.5,659 A3.2,3.2 0 1 0 421.5,664 L419.5,663 L418,661 Z" stroke="#777" stroke-width="1.1" fill="none"/><rect x="430.5" y="658.5" width="12" height="8.5" fill="#fff" stroke="#444" stroke-width="1"/><path d="M430.5,660.5 H442.5" stroke="#444" stroke-width="1.2"/><path d="M432.5,662.5 L434,663.7 L432.5,665 M435,665 H437" stroke="#444" stroke-width="0.8" fill="none"/><path d="M445,660.5 H449.5 L447.25,663 Z" fill="#444"/><path d="M1222.5,663.5 H1228 L1225.25,660.5 Z" fill="#444"/><rect x="915" y="673.7" width="80.79999999999995" height="17.5" fill="#f0f0f0"/><rect x="998" y="673.7" width="35.5" height="17.5" fill="#f0f0f0"/><rect x="1035.5" y="673.7" width="45.0" height="17.5" fill="#f0f0f0"/><rect x="1083.5" y="673.7" width="76.5" height="17.5" fill="#f0f0f0"/><rect x="1162" y="673.7" width="46.5" height="17.5" fill="#f0f0f0"/><rect x="1211" y="673.7" width="78" height="17.5" fill="#f0f0f0"/><rect x="1291.5" y="673.7" width="29.0" height="17.5" fill="#f0f0f0"/><rect x="1323" y="673.7" width="17.5" height="17.5" fill="#f0f0f0"/><rect x="1343" y="673.7" width="17" height="17.5" fill="#f0f0f0"/><rect x="1362.5" y="673.7" width="16.5" height="17.5" fill="#f0f0f0"/><rect x="1381.5" y="673.7" width="36.5" height="17.5" fill="#f0f0f0"/><rect x="1036.5" y="674.5" width="15" height="16" fill="#cfe5f7" stroke="#6aaee0" stroke-width="1"/><rect x="1054.5" y="674.5" width="15" height="16" fill="#cfe5f7" stroke="#6aaee0" stroke-width="1"/><rect x="1086.0" y="674.5" width="15.200000000000045" height="16" fill="#cfe5f7" stroke="#6aaee0" stroke-width="1"/><rect x="1163.7" y="674.5" width="14.5" height="16" fill="#cfe5f7" stroke="#6aaee0" stroke-width="1"/><rect x="1181.7" y="674.5" width="14.700000000000045" height="16" fill="#cfe5f7" stroke="#6aaee0" stroke-width="1"/><rect x="1212.9" y="674.5" width="15.0" height="16" fill="#cfe5f7" stroke="#6aaee0" stroke-width="1"/><path d="M1038.5,679 H1049.5 M1038.5,682.5 H1049.5 M1038.5,686 H1049.5 M1041,676.5 V688.5 M1044,676.5 V688.5 M1047,676.5 V688.5" stroke="#333" stroke-width="1"/><g fill="#333"><rect x="1057.0" y="677.5" width="1.3" height="1.3"/><rect x="1057.0" y="681.0" width="1.3" height="1.3"/><rect x="1057.0" y="684.5" width="1.3" height="1.3"/><rect x="1060.5" y="677.5" width="1.3" height="1.3"/><rect x="1060.5" y="681.0" width="1.3" height="1.3"/><rect x="1060.5" y="684.5" width="1.3" height="1.3"/><rect x="1064.0" y="677.5" width="1.3" height="1.3"/><rect x="1064.0" y="681.0" width="1.3" height="1.3"/><rect x="1064.0" y="684.5" width="1.3" height="1.3"/></g><path d="M1074,681.5 H1078.5 L1076.25,684 Z" fill="#444"/><path d="M1124,681.5 H1128.5 L1126.25,684 Z" fill="#444"/><path d="M1153,681.5 H1157.5 L1155.25,684 Z" fill="#444"/><path d="M1201.5,681.5 H1206.0 L1203.75,684 Z" fill="#444"/><path d="M1283,681.5 H1287.5 L1285.25,684 Z" fill="#444"/><path d="M1313.5,681.5 H1318.0 L1315.75,684 Z" fill="#444"/><path d="M1089,676.5 V688 H1098.5" stroke="#333" stroke-width="1.2" fill="none"/><path d="M1089,676.5 V685" stroke="#333" stroke-width="1.2"/><circle cx="1111.5" cy="683.5" r="5" fill="none" stroke="#555" stroke-width="1.1"/><path d="M1111.5,683.5 L1120,679 M1117,678.5 L1120,679 L1118.5,681.5" stroke="#555" stroke-width="1.1" fill="none"/><path d="M1136,677 L1145,689" stroke="#d02020" stroke-width="1.2"/><path d="M1140.5,677 V689" stroke="#20a040" stroke-width="1.2"/><path d="M1166,688 L1176,678.5 M1166,688 H1176" stroke="#333" stroke-width="1.1" fill="none"/><rect x="1185" y="679" width="9" height="9" fill="none" stroke="#333" stroke-width="1.1"/><circle cx="1185" cy="678.5" r="2.2" fill="#fff" stroke="#333" stroke-width="1"/><path d="M1220.5,677 V683 L1215.5,689 M1220.5,683 L1225.5,689" stroke="#333" stroke-width="1.8" fill="none"/><path d="M1239,677 V683 L1234,689 M1239,683 L1244,689" stroke="#333" stroke-width="1.8" fill="none"/><path d="M1257,677 V683 L1252,689 M1257,683 L1262,689" stroke="#333" stroke-width="1.8" fill="none"/><circle cx="1225" cy="678.5" r="2" fill="#fff" stroke="#333" stroke-width="1"/><path d="M1240,677 L1243,680 L1240,680.5" stroke="#333" stroke-width="1" fill="none"/><circle cx="1300.8" cy="682.5" r="3.6" fill="none" stroke="#444" stroke-width="2.4"/><path d="M1300.8,676 V689 M1294.3,682.5 H1307.3 M1296.2,677.9 L1305.4,687.1 M1305.4,677.9 L1296.2,687.1" stroke="#444" stroke-width="1.8"/><circle cx="1300.8" cy="682.5" r="1.6" fill="#f0f0f0"/><path d="M1325,682.5 H1338 M1331.5,676 V689" stroke="#333" stroke-width="1.4"/><rect x="1345" y="676.5" width="5" height="5" fill="none" stroke="#555" stroke-width="1"/><circle cx="1355" cy="681" r="2.6" fill="none" stroke="#555" stroke-width="1"/><path d="M1350,684.5 L1352.5,689 H1347.5 Z" fill="none" stroke="#555" stroke-width="1"/><rect x="1365" y="677" width="8" height="7" fill="#2060b0"/><rect x="1365" y="684" width="6" height="4" fill="#f0a010"/><path d="M1370,686 L1372.5,689 L1377,682" stroke="#20a040" stroke-width="1.6" fill="none"/><rect x="1384.5" y="677.5" width="11.5" height="10" fill="none" stroke="#444" stroke-width="1.1"/><path d="M1387,685.5 L1393.5,679.5 M1391,679.5 H1393.5 V682 M1387,683 V685.5 H1389.5" stroke="#444" stroke-width="0.9" fill="none"/><path d="M1401.5,677.5 H1413.5 M1401.5,682.3 H1413.5 M1401.5,687 H1413.5" stroke="#333" stroke-width="1.4"/><path d="M1237.5,189 V196" stroke="#aaa" stroke-width="2.5"/><rect x="1248" y="204.5" width="15" height="13.5" fill="#e4e4e4" stroke="#9a9a9a" stroke-width="0.8"/><rect x="1250.5" y="206.5" width="4" height="9" fill="none" stroke="#333" stroke-width="1.1"/><rect x="1256" y="206.5" width="5" height="4" fill="none" stroke="#333" stroke-width="1.1"/><rect x="1256" y="211.5" width="5" height="4" fill="none" stroke="#333" stroke-width="1.1"/><rect x="1266.5" y="204.5" width="15" height="13.5" fill="#e4e4e4" stroke="#9a9a9a" stroke-width="0.8"/><path d="M1269,207 H1279 L1275.5,211.5 V216 L1272.5,214.5 V211.5 Z" fill="none" stroke="#333" stroke-width="1.1"/><rect x="1285" y="204.5" width="15" height="13.5" fill="#e4e4e4" stroke="#9a9a9a" stroke-width="0.8"/><rect x="1287" y="207" width="10" height="3" fill="#555"/><rect x="1287" y="211.5" width="10" height="3" fill="#555"/><path d="M1291,216 L1298,209" stroke="#d8b020" stroke-width="2.2"/><rect x="1303" y="204.5" width="15" height="13.5" fill="#e4e4e4" stroke="#9a9a9a" stroke-width="0.8"/><rect x="1305" y="206.5" width="11" height="10" fill="#fff" stroke="#333" stroke-width="1.1"/><path d="M1305,209 H1316" stroke="#333" stroke-width="1.5"/><g fill="#333"><rect x="1307" y="211" width="1.4" height="1.4"/><rect x="1310" y="211" width="1.4" height="1.4"/><rect x="1313" y="211" width="1.4" height="1.4"/><rect x="1307" y="214" width="1.4" height="1.4"/><rect x="1310" y="214" width="1.4" height="1.4"/><rect x="1313" y="214" width="1.4" height="1.4"/></g><rect x="1321.5" y="207.5" width="8.5" height="9" fill="#fff" stroke="#d0d0d0" stroke-width="1"/><path d="M1251.5,232 V355.5 H1262" stroke="#a8a8a8" stroke-width="1" fill="none"/><path d="M1251.5,231.5 H1260" stroke="#a8a8a8" stroke-width="1"/><rect x="1248" y="228.5" width="6.5" height="6.5" fill="#fff" stroke="#8a9ab0" stroke-width="0.8"/><path d="M1249.5,231.75 H1253 M1251.25,230.0 V233.5" stroke="#2040a0" stroke-width="0.8"/><path d="M1251.5,244.8 H1260" stroke="#a8a8a8" stroke-width="1"/><rect x="1248" y="241.77" width="6.5" height="6.5" fill="#fff" stroke="#8a9ab0" stroke-width="0.8"/><path d="M1249.5,245.02 H1253 M1251.25,243.27 V246.77" stroke="#2040a0" stroke-width="0.8"/><path d="M1251.5,258.0 H1260" stroke="#a8a8a8" stroke-width="1"/><path d="M1251.5,271.3 H1260" stroke="#a8a8a8" stroke-width="1"/><path d="M1251.5,284.6 H1260" stroke="#a8a8a8" stroke-width="1"/><rect x="1248" y="281.58" width="6.5" height="6.5" fill="#fff" stroke="#8a9ab0" stroke-width="0.8"/><path d="M1249.5,284.83 H1253 M1251.25,283.08 V286.58" stroke="#2040a0" stroke-width="0.8"/><path d="M1251.5,297.9 H1260" stroke="#a8a8a8" stroke-width="1"/><rect x="1248" y="294.85" width="6.5" height="6.5" fill="#fff" stroke="#8a9ab0" stroke-width="0.8"/><path d="M1249.5,298.1 H1253 M1251.25,296.35 V299.85" stroke="#2040a0" stroke-width="0.8"/><path d="M1251.5,311.1 H1260" stroke="#a8a8a8" stroke-width="1"/><path d="M1251.5,324.4 H1260" stroke="#a8a8a8" stroke-width="1"/><path d="M1251.5,337.7 H1260" stroke="#a8a8a8" stroke-width="1"/><rect x="1248" y="334.65999999999997" width="6.5" height="6.5" fill="#fff" stroke="#8a9ab0" stroke-width="0.8"/><path d="M1249.5,337.90999999999997 H1253 M1251.25,336.15999999999997 V339.65999999999997" stroke="#2040a0" stroke-width="0.8"/><path d="M1251.5,350.9 H1260" stroke="#a8a8a8" stroke-width="1"/><rect x="1273" y="225.5" width="40" height="13" fill="#ebebeb"/><path d="M1266,227 H1270 M1266,227 V237 M1266,231.5 H1270 M1266,236 H1270" stroke="#222" stroke-width="1.2"/><rect x="1261" y="239" width="10" height="10" fill="#20c0c0"/><path d="M1261,246 L1266,240 L1271,244 V249 H1261 Z" fill="#8a2a10"/><rect x="1262" y="245" width="4" height="4" fill="#20a020"/><path d="M1262,252 V258 M1262,255 H1265 M1265,252 V258" stroke="#222" stroke-width="1"/><path d="M1265,257 L1270,261" stroke="#d02020" stroke-width="1.6"/><path d="M1268,254 V262" stroke="#555" stroke-width="0.8"/><rect x="1261" y="265" width="10" height="10" fill="#20c8d8"/><path d="M1262,274 L1266,268 H1271 V275 H1262 Z" fill="#222"/><circle cx="1266" cy="272" r="1.6" fill="#fff"/><path d="M1261,287 Q1262,283 1264,285 M1266,287 Q1267,282 1270,284" stroke="#333" stroke-width="1" fill="none"/><circle cx="1263" cy="288" r="1" fill="#333"/><path d="M1261,293 H1270 M1261,296 H1264 M1262,297 V302 M1266,299 Q1268,296 1270,299 V302" stroke="#444" stroke-width="1.2" fill="none"/><rect x="1261" y="299" width="3" height="3" fill="#2050c0"/><rect x="1261" y="306" width="10" height="10" fill="#3a9ad0"/><path d="M1261,316 V309 L1266,306" stroke="#eee" stroke-width="1.2" fill="none"/><circle cx="1267" cy="312" r="2.6" fill="#f0a020"/><path d="M1264,320 Q1266,317 1268,320 M1266,320 V323" stroke="#a08020" stroke-width="1.4" fill="none"/><path d="M1265,325 Q1266,327 1267,325" stroke="#2040d0" stroke-width="1.6" fill="none"/><rect x="1261" y="333" width="10" height="9" fill="#40c0d0"/><rect x="1261" y="336" width="10" height="5" fill="#111"/><path d="M1262,342 H1271 M1264,343 V346" stroke="#c020c0" stroke-width="1.2"/><path d="M1264,347 V357 H1270 M1266,349 V352 M1269,347 V350" stroke="#222" stroke-width="1.3" fill="none"/><rect x="1263" y="353" width="3" height="4" fill="#d02020"/><path d="M1411.5,668 L1417,662 M1414,668 L1417,665" stroke="#999" stroke-width="0.9"/></svg>
<span id="t0" style="position:absolute;left:632.4px;top:7.38px;font:400 9px/9px 'Liberation Sans', sans-serif;color:#444;white-space:nowrap;transform:scaleX(0.9447);transform-origin:0 0;">E&amp;I Designer</span>
<span id="t1" style="position:absolute;left:691.6px;top:7.38px;font:400 9px/9px 'Liberation Sans', sans-serif;color:#444;white-space:nowrap;transform:scaleX(0.8910);transform-origin:0 0;">3DPI0001.DWG</span>
<span id="t2" style="position:absolute;left:9.6px;top:23.88px;font:400 9px/9px 'Liberation Sans', sans-serif;color:#2e2e2e;white-space:nowrap;transform:scaleX(0.9167);transform-origin:0 0;">CADISON</span>
<span id="t3" style="position:absolute;left:65.5px;top:23.88px;font:400 9px/9px 'Liberation Sans', sans-serif;color:#2e2e2e;white-space:nowrap;transform:scaleX(0.9564);transform-origin:0 0;">Tools</span>
<span id="t4" style="position:absolute;left:104px;top:23.88px;font:400 9px/9px 'Liberation Sans', sans-serif;color:#2e2e2e;white-space:nowrap;transform:scaleX(0.8950);transform-origin:0 0;">MSR</span>
<span id="t5" style="position:absolute;left:139.6px;top:23.88px;font:400 9px/9px 'Liberation Sans', sans-serif;color:#2e2e2e;white-space:nowrap;transform:scaleX(0.7989);transform-origin:0 0;">ET</span>
<span id="t6" style="position:absolute;left:9.1px;top:42.08px;font:400 9px/9px 'Liberation Sans', sans-serif;color:#2e2e2e;white-space:nowrap;transform:scaleX(0.9659);transform-origin:0 0;">Tools</span>
<span id="t7" style="position:absolute;left:44.4px;top:42.08px;font:400 9px/9px 'Liberation Sans', sans-serif;color:#2e2e2e;white-space:nowrap;transform:scaleX(0.9701);transform-origin:0 0;">Diagram</span>
<span id="t8" style="position:absolute;left:92.2px;top:42.08px;font:400 9px/9px 'Liberation Sans', sans-serif;color:#2e2e2e;white-space:nowrap;transform:scaleX(0.9810);transform-origin:0 0;">3D Model</span>
<span id="t9" style="position:absolute;left:144.7px;top:42.08px;font:400 9px/9px 'Liberation Sans', sans-serif;color:#2e2e2e;white-space:nowrap;transform:scaleX(0.9877);transform-origin:0 0;">Layout</span>
<span id="t10" style="position:absolute;left:186px;top:42.08px;font:400 9px/9px 'Liberation Sans', sans-serif;color:#2e2e2e;white-space:nowrap;transform:scaleX(0.9529);transform-origin:0 0;">Settings</span>
<span id="t11" style="position:absolute;left:231.8px;top:42.08px;font:400 9px/9px 'Liberation Sans', sans-serif;color:#2e2e2e;white-space:nowrap;transform:scaleX(0.9100);transform-origin:0 0;">MSR</span>
<span id="t12" style="position:absolute;left:264.5px;top:42.08px;font:400 9px/9px 'Liberation Sans', sans-serif;color:#2e2e2e;white-space:nowrap;transform:scaleX(0.7989);transform-origin:0 0;">ET</span>
<span id="t13" style="position:absolute;left:21px;top:61.38px;font:400 9px/9px 'Liberation Sans', sans-serif;color:#2e2e2e;white-space:nowrap;transform:scaleX(0.9709);transform-origin:0 0;">Electrical Distributor</span>
<span id="t14" style="position:absolute;left:21px;top:79.08px;font:400 9px/9px 'Liberation Sans', sans-serif;color:#2e2e2e;white-space:nowrap;transform:scaleX(0.9910);transform-origin:0 0;">Control cabinet</span>
<span id="t15" style="position:absolute;left:20.9px;top:96.38px;font:400 9px/9px 'Liberation Sans', sans-serif;color:#2e2e2e;white-space:nowrap;transform:scaleX(0.9287);transform-origin:0 0;">Rail system</span>
<span id="t16" style="position:absolute;left:5.6px;top:130.98px;font:400 9px/9px 'Liberation Sans', sans-serif;color:#2e2e2e;white-space:nowrap;transform:scaleX(0.9923);transform-origin:0 0;">Distribution and units</span>
<span id="t17" style="position:absolute;left:124.8px;top:70.28px;font:400 9px/9px 'Liberation Sans', sans-serif;color:#2e2e2e;white-space:nowrap;transform:scaleX(0.9658);transform-origin:0 0;">Power switch</span>
<span id="t18" style="position:absolute;left:125px;top:87.98px;font:400 9px/9px 'Liberation Sans', sans-serif;color:#2e2e2e;white-space:nowrap;transform:scaleX(0.9721);transform-origin:0 0;">Circuit breaker</span>
<span id="t19" style="position:absolute;left:144.4px;top:131.18px;font:400 9px/9px 'Liberation Sans', sans-serif;color:#2e2e2e;white-space:nowrap;transform:scaleX(0.9980);transform-origin:0 0;">Control and circuit</span>
<span id="t20" style="position:absolute;left:272px;top:130.88px;font:400 9px/9px 'Liberation Sans', sans-serif;color:#2e2e2e;white-space:nowrap;transform:scaleX(0.9708);transform-origin:0 0;">Protection devices</span>
<span id="t21" style="position:absolute;left:360.8px;top:130.88px;font:400 9px/9px 'Liberation Sans', sans-serif;color:#2e2e2e;white-space:nowrap;transform:scaleX(0.9467);transform-origin:0 0;">Electrical Load</span>
<span id="t22" style="position:absolute;left:461px;top:78.98px;font:400 9px/9px 'Liberation Sans', sans-serif;color:#2e2e2e;white-space:nowrap;transform:scaleX(0.9530);transform-origin:0 0;">Transformer</span>
<span id="t23" style="position:absolute;left:460.6px;top:96.98px;font:400 9px/9px 'Liberation Sans', sans-serif;color:#2e2e2e;white-space:nowrap;transform:scaleX(0.9511);transform-origin:0 0;">Rectifier</span>
<span id="t24" style="position:absolute;left:448.4px;top:131.38px;font:400 9px/9px 'Liberation Sans', sans-serif;color:#2e2e2e;white-space:nowrap;transform:scaleX(0.9489);transform-origin:0 0;">Transformer</span>
<span id="t25" style="position:absolute;left:533.5px;top:78.98px;font:400 9px/9px 'Liberation Sans', sans-serif;color:#2e2e2e;white-space:nowrap;">I/O board</span>
<span id="t26" style="position:absolute;left:533.5px;top:96.98px;font:400 9px/9px 'Liberation Sans', sans-serif;color:#2e2e2e;white-space:nowrap;transform:scaleX(0.9254);transform-origin:0 0;">PLC Physical Signal</span>
<span id="t27" style="position:absolute;left:551.6px;top:131.38px;font:400 9px/9px 'Liberation Sans', sans-serif;color:#2e2e2e;white-space:nowrap;transform:scaleX(0.8507);transform-origin:0 0;">PLC</span>
<span id="t28" style="position:absolute;left:618.5px;top:86.38px;font:400 9px/9px 'Liberation Sans', sans-serif;color:#2e2e2e;white-space:nowrap;transform:scaleX(0.9256);transform-origin:0 0;">Signal Devices</span>
<span id="t29" style="position:absolute;left:619.5px;top:131.38px;font:400 9px/9px 'Liberation Sans', sans-serif;color:#2e2e2e;white-space:nowrap;transform:scaleX(0.9722);transform-origin:0 0;">Measurement</span>
<span id="t30" style="position:absolute;left:682px;top:86.38px;font:400 9px/9px 'Liberation Sans', sans-serif;color:#2e2e2e;white-space:nowrap;transform:scaleX(1.0162);transform-origin:0 0;">Multiple Potential/Wire</span>
<span id="t31" style="position:absolute;left:784.6px;top:86.38px;font:400 9px/9px 'Liberation Sans', sans-serif;color:#2e2e2e;white-space:nowrap;transform:scaleX(0.9228);transform-origin:0 0;">Cable</span>
<span id="t32" style="position:absolute;left:719.4px;top:131.38px;font:400 9px/9px 'Liberation Sans', sans-serif;color:#2e2e2e;white-space:nowrap;transform:scaleX(0.9389);transform-origin:0 0;">Cable and wires</span>
<span id="t33" style="position:absolute;left:836px;top:131.68px;font:400 9px/9px 'Liberation Sans', sans-serif;color:#2e2e2e;white-space:nowrap;transform:scaleX(0.9714);transform-origin:0 0;">Cable trays and installation ducts</span>
<span id="t34" style="position:absolute;left:972.6px;top:86.38px;font:400 9px/9px 'Liberation Sans', sans-serif;color:#2e2e2e;white-space:nowrap;transform:scaleX(0.9908);transform-origin:0 0;">Current circuit designation</span>
<span id="t35" style="position:absolute;left:977.2px;top:131.68px;font:400 9px/9px 'Liberation Sans', sans-serif;color:#2e2e2e;white-space:nowrap;transform:scaleX(0.9929);transform-origin:0 0;">Component designation</span>
<span id="t36" style="position:absolute;left:1085px;top:95.38px;font:400 9px/9px 'Liberation Sans', sans-serif;color:#2e2e2e;white-space:nowrap;transform:scaleX(0.9949);transform-origin:0 0;">ConduitLine</span>
<span id="t37" style="position:absolute;left:1127px;top:131.68px;font:400 9px/9px 'Liberation Sans', sans-serif;color:#2e2e2e;white-space:nowrap;transform:scaleX(0.9850);transform-origin:0 0;">Conduits</span>
<span id="t38" style="position:absolute;left:1213.4px;top:95.38px;font:400 9px/9px 'Liberation Sans', sans-serif;color:#2e2e2e;white-space:nowrap;transform:scaleX(0.9440);transform-origin:0 0;">TrenchLine</span>
<span id="t39" style="position:absolute;left:1230.8px;top:131.68px;font:400 9px/9px 'Liberation Sans', sans-serif;color:#2e2e2e;white-space:nowrap;transform:scaleX(0.9453);transform-origin:0 0;">Cable Trenches</span>
<span id="t40" style="position:absolute;left:158px;top:148.18px;font:400 9px/9px 'Liberation Sans', sans-serif;color:#1f8ad6;white-space:nowrap;transform:scaleX(0.8739);transform-origin:0 0;">Share</span>
<span id="t41" style="position:absolute;left:23px;top:167.98px;font:700 9px/9px 'Liberation Sans', sans-serif;color:#333;white-space:nowrap;transform:scaleX(1.0104);transform-origin:0 0;">3DPI0001*</span>
<span id="t42" style="position:absolute;left:32.7px;top:188.38px;font:400 9px/9px 'Liberation Sans', sans-serif;color:#222;white-space:nowrap;transform:scaleX(0.8682);transform-origin:0 0;">Use Catalogue</span>
<span id="t43" style="position:absolute;left:42.3px;top:201.88px;font:400 9px/9px 'Liberation Sans', sans-serif;color:#222;white-space:nowrap;transform:scaleX(0.8682);transform-origin:0 0;">Use Catalogue</span>
<span id="t44" style="position:absolute;left:31px;top:213.78px;font:400 9px/9px 'Liberation Sans', sans-serif;color:#222;white-space:nowrap;transform:scaleX(0.8812);transform-origin:0 0;">Selected Object</span>
<span id="t45" style="position:absolute;left:150px;top:215.08px;font:400 9px/9px 'Liberation Sans', sans-serif;color:#222;white-space:nowrap;transform:scaleX(0.8879);transform-origin:0 0;">Wiring Duct</span>
<span id="t46" style="position:absolute;left:42.4px;top:237.28px;font:400 9px/9px 'Liberation Sans', sans-serif;color:#222;white-space:nowrap;transform:scaleX(0.8636);transform-origin:0 0;">Show Catalogues For Missing Component</span>
<span id="t47" style="position:absolute;left:42.7px;top:262.98px;font:400 9px/9px 'Liberation Sans', sans-serif;color:#222;white-space:nowrap;transform:scaleX(0.8823);transform-origin:0 0;">Fit Within</span>
<span id="t48" style="position:absolute;left:32.7px;top:275.18px;font:400 9px/9px 'Liberation Sans', sans-serif;color:#222;white-space:nowrap;transform:scaleX(0.8751);transform-origin:0 0;">Routing Components</span>
<span id="t49" style="position:absolute;left:35.8px;top:293.68px;font:400 9px/9px 'Liberation Sans', sans-serif;color:#222;white-space:nowrap;transform:scaleX(0.9039);transform-origin:0 0;">Cable Tray (straight)</span>
<span id="t50" style="position:absolute;left:245px;top:294.08px;font:400 9px/9px 'Liberation Sans', sans-serif;color:#222;white-space:nowrap;transform:scaleX(0.8793);transform-origin:0 0;">Available Objects</span>
<span id="t51" style="position:absolute;left:40.4px;top:406.08px;font:400 9px/9px 'Liberation Sans', sans-serif;color:#222;white-space:nowrap;transform:scaleX(0.9001);transform-origin:0 0;">Rotation Angle</span>
<span id="t52" style="position:absolute;left:213.8px;top:408.98px;font:400 9px/9px 'Liberation Sans', sans-serif;color:#222;white-space:nowrap;transform:scaleX(0.9570);transform-origin:0 0;">0</span>
<span id="t53" style="position:absolute;left:32.5px;top:428.88px;font:400 9px/9px 'Liberation Sans', sans-serif;color:#222;white-space:nowrap;transform:scaleX(0.8768);transform-origin:0 0;">Default Graphic Parameters</span>
<span id="t54" style="position:absolute;left:30.8px;top:459.78px;font:400 9px/9px 'Liberation Sans', sans-serif;color:#222;white-space:nowrap;transform:scaleX(0.8682);transform-origin:0 0;">Height H</span>
<span id="t55" style="position:absolute;left:30.8px;top:476.98px;font:400 9px/9px 'Liberation Sans', sans-serif;color:#222;white-space:nowrap;transform:scaleX(0.8599);transform-origin:0 0;">Width B</span>
<span id="t56" style="position:absolute;left:30.8px;top:494.58px;font:400 9px/9px 'Liberation Sans', sans-serif;color:#222;white-space:nowrap;transform:scaleX(0.8703);transform-origin:0 0;">Cover</span>
<span id="t57" style="position:absolute;left:119px;top:514.38px;font:400 9px/9px 'Liberation Sans', sans-serif;color:#222;white-space:nowrap;transform:scaleX(0.8697);transform-origin:0 0;">Display Additional Graphic Parameters</span>
<span id="t58" style="position:absolute;left:32.9px;top:535.78px;font:400 9px/9px 'Liberation Sans', sans-serif;color:#222;white-space:nowrap;transform:scaleX(0.8657);transform-origin:0 0;">Additional Graphic Parameters</span>
<span id="t59" style="position:absolute;left:28px;top:664.58px;font:400 9px/9px 'Liberation Sans', sans-serif;color:#222;white-space:nowrap;transform:scaleX(0.8976);transform-origin:0 0;">Attach Catalog</span>
<span id="t60" style="position:absolute;left:42.5px;top:443.28px;font:400 9px/9px 'Liberation Sans', sans-serif;color:#9a9a9a;white-space:nowrap;transform:scaleX(0.8714);transform-origin:0 0;">Use Updated Parameters</span>
<span id="t61" style="position:absolute;left:214.5px;top:460.38px;font:400 9px/9px 'Liberation Sans', sans-serif;color:#8a8a8a;white-space:nowrap;transform:scaleX(0.8972);transform-origin:0 0;">2</span>
<span id="t62" style="position:absolute;left:214.5px;top:477.38px;font:400 9px/9px 'Liberation Sans', sans-serif;color:#8a8a8a;white-space:nowrap;transform:scaleX(0.8972);transform-origin:0 0;">2</span>
<span id="t63" style="position:absolute;left:214px;top:494.88px;font:400 9px/9px 'Liberation Sans', sans-serif;color:#8a8a8a;white-space:nowrap;transform:scaleX(0.8624);transform-origin:0 0;">Open</span>
<span id="t64" style="position:absolute;left:306.6px;top:462.25px;font:400 7.5px/7.5px 'Liberation Sans', sans-serif;color:#aaaaaa;white-space:nowrap;transform:scaleX(0.9120);transform-origin:0 0;">mm</span>
<span id="t65" style="position:absolute;left:306.6px;top:479.25px;font:400 7.5px/7.5px 'Liberation Sans', sans-serif;color:#aaaaaa;white-space:nowrap;transform:scaleX(0.9120);transform-origin:0 0;">mm</span>
<span id="t66" style="position:absolute;left:454.9px;top:660.71px;font:700 8.6px/8.6px 'Liberation Mono', monospace;color:#111;white-space:nowrap;transform:scaleX(0.9889);transform-origin:0 0;">ITF_CABLETRAYROUTE</span>
<span id="t67" style="position:absolute;left:551px;top:660.71px;font:400 8.6px/8.6px 'Liberation Mono', monospace;color:#000;white-space:nowrap;transform:scaleX(0.9972);transform-origin:0 0;">Select object:</span>
<span id="t68" style="position:absolute;left:919.6px;top:678.68px;font:400 9px/9px 'Liberation Sans', sans-serif;color:#333;white-space:nowrap;transform:scaleX(0.9937);transform-origin:0 0;">Work plane: 0 mm</span>
<span id="t69" style="position:absolute;left:1001px;top:678.68px;font:400 9px/9px 'Liberation Sans', sans-serif;color:#333;white-space:nowrap;transform:scaleX(0.9058);transform-origin:0 0;">MODEL</span>
<span id="t70" style="position:absolute;left:1268px;top:678.68px;font:400 9px/9px 'Liberation Sans', sans-serif;color:#444;white-space:nowrap;transform:scaleX(1.0387);transform-origin:0 0;">1:1</span>
<span id="t71" style="position:absolute;left:1244.7px;top:186.98px;font:400 9px/9px 'Liberation Sans', sans-serif;color:#555;white-space:nowrap;transform:scaleX(0.8912);transform-origin:0 0;">OBJECTMANAGER</span>
<span id="t72" style="position:absolute;left:1332.5px;top:208.08px;font:400 9px/9px 'Liberation Sans', sans-serif;color:#8a8a8a;white-space:nowrap;transform:scaleX(0.9013);transform-origin:0 0;">Multiple Insert</span>
<span id="t73" style="position:absolute;left:1276.6px;top:228.18px;font:700 9px/9px 'Liberation Sans', sans-serif;color:#111;white-space:nowrap;transform:scaleX(0.8493);transform-origin:0 0;">Favorites</span>
<span id="t74" style="position:absolute;left:1274.5px;top:241.45px;font:400 9px/9px 'Liberation Sans', sans-serif;color:#111;white-space:nowrap;transform:scaleX(0.9229);transform-origin:0 0;">Common</span>
<span id="t75" style="position:absolute;left:1274.5px;top:254.72px;font:400 9px/9px 'Liberation Sans', sans-serif;color:#111;white-space:nowrap;transform:scaleX(0.9700);transform-origin:0 0;">Heating</span>
<span id="t76" style="position:absolute;left:1274.5px;top:267.99px;font:400 9px/9px 'Liberation Sans', sans-serif;color:#111;white-space:nowrap;transform:scaleX(1.0133);transform-origin:0 0;">Ventilation</span>
<span id="t77" style="position:absolute;left:1274.5px;top:281.26px;font:400 9px/9px 'Liberation Sans', sans-serif;color:#111;white-space:nowrap;transform:scaleX(0.9736);transform-origin:0 0;">Energy supply and distribution</span>
<span id="t78" style="position:absolute;left:1274.5px;top:294.53px;font:400 9px/9px 'Liberation Sans', sans-serif;color:#111;white-space:nowrap;transform:scaleX(0.9927);transform-origin:0 0;">Automation</span>
<span id="t79" style="position:absolute;left:1274.5px;top:307.80px;font:400 9px/9px 'Liberation Sans', sans-serif;color:#111;white-space:nowrap;transform:scaleX(0.9349);transform-origin:0 0;">Gas Technology</span>
<span id="t80" style="position:absolute;left:1274.5px;top:321.07px;font:400 9px/9px 'Liberation Sans', sans-serif;color:#111;white-space:nowrap;transform:scaleX(0.9113);transform-origin:0 0;">Sanitary</span>
<span id="t81" style="position:absolute;left:1274.5px;top:334.34px;font:400 9px/9px 'Liberation Sans', sans-serif;color:#111;white-space:nowrap;transform:scaleX(0.9600);transform-origin:0 0;">Measurement and Control</span>
<span id="t82" style="position:absolute;left:1274.5px;top:347.61px;font:400 9px/9px 'Liberation Sans', sans-serif;color:#111;white-space:nowrap;transform:scaleX(0.9386);transform-origin:0 0;">Plant Design</span>
<span id="t83" style="position:absolute;left:113.7px;top:708.42px;font:700 19px/19px 'Liberation Sans', sans-serif;color:#4ba2d8;white-space:nowrap;transform:scaleX(0.9372);transform-origin:0 0;">Electrical &amp; Instrumentation</span>
<span id="t84" style="position:absolute;left:195.6px;top:731.42px;font:700 19px/19px 'Liberation Sans', sans-serif;color:#4ba2d8;white-space:nowrap;transform:scaleX(0.9138);transform-origin:0 0;">Designer</span>
<span id="t85" style="position:absolute;left:927.4px;top:751.02px;font:400 21px/21px 'Liberation Sans', sans-serif;color:#ffffff;white-space:nowrap;transform:scaleX(1.0807);transform-origin:0 0;">info@enidesigner.com | www.enidesigner.com</span>
<span id="t86" style="position:absolute;left:376px;top:190.88px;font:400 9px/9px 'Liberation Sans', sans-serif;color:#e6e6e6;white-space:nowrap;">me]</span>
</body></html>
